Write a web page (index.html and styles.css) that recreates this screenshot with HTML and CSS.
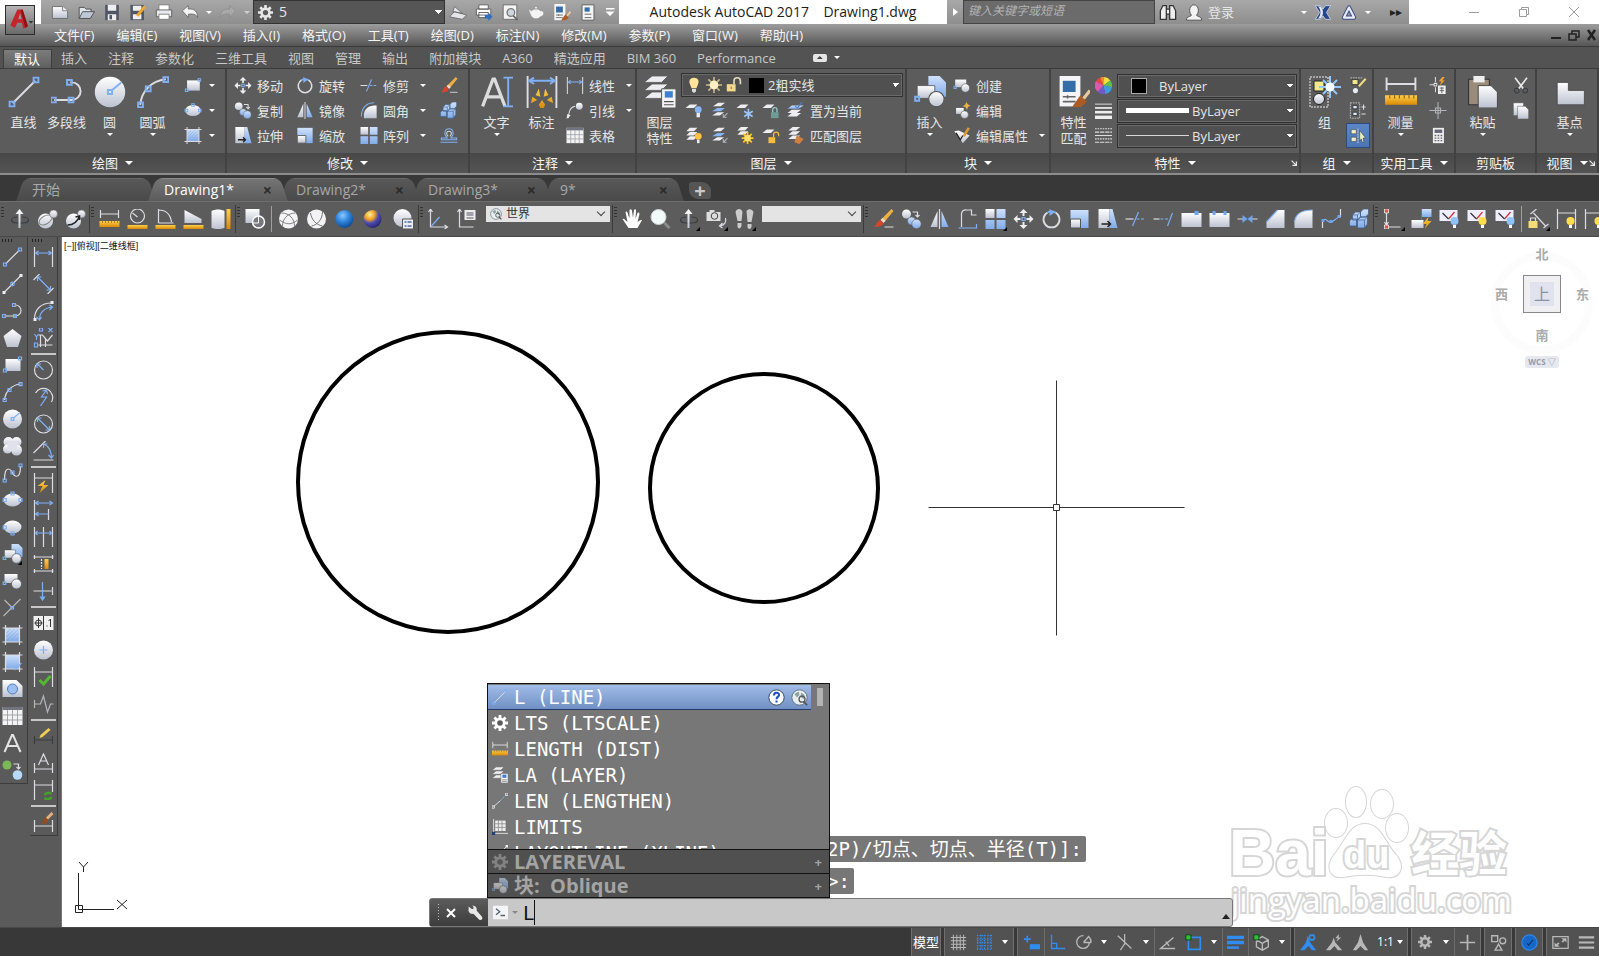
FILE: index.html
```html
<!DOCTYPE html>
<html lang="zh-CN">

<head>
    <meta charset="utf-8">
    <title>Autodesk AutoCAD 2017</title>
    <link rel="stylesheet" href="styles.css">
</head>

<body>
    <!-- icon sprite -->
    <svg class="sprite" width="0" height="0" aria-hidden="true">
        <defs>
            <linearGradient id="light" x1="0" y1="0" x2="0" y2="1">
                <stop offset="0" stop-color="#ffffff" />
                <stop offset="1" stop-color="#bcc2d0" />
            </linearGradient>
            <linearGradient id="sky" x1="0" y1="0" x2="0" y2="1">
                <stop offset="0" stop-color="#cfe1fb" />
                <stop offset="1" stop-color="#7fabea" />
            </linearGradient>
            <linearGradient id="gold" x1="0" y1="0" x2="0" y2="1">
                <stop offset="0" stop-color="#ffd04a" />
                <stop offset="1" stop-color="#d98a08" />
            </linearGradient>
            <radialGradient id="blueball" cx=".4" cy=".3" r=".7">
                <stop offset="0" stop-color="#8cc8ff" />
                <stop offset=".5" stop-color="#2f86dc" />
                <stop offset="1" stop-color="#0f4c98" />
            </radialGradient>
            <radialGradient id="goldball" cx=".35" cy=".25" r=".8">
                <stop offset="0" stop-color="#fff0a0" />
                <stop offset=".35" stop-color="#f0a020" />
                <stop offset=".6" stop-color="#4b4bb0" />
                <stop offset="1" stop-color="#25206a" />
            </radialGradient>
        </defs>

        <!-- draw -->
        <symbol id="line" viewBox="0 0 20 20"><path class="w" d="M3 17L17 3" /><path class="b" d="M1 16h3v3h-3zM16 1h3v3h-3z" /></symbol>
        <symbol id="xline" viewBox="0 0 20 20"><path class="w" d="M2 18L18 2" /><path class="wf" d="M0 17h3v3h-3zM17 0h3v3h-3z" /><circle class="b" cx="10" cy="10" r="1.8" /></symbol>
        <symbol id="pline" viewBox="0 0 20 20"><path class="w" d="M2 15h11a5.500 5.500 0 0 0 0-11h-1" /><path class="b" d="M0 13.500h3v3h-3zM11 13.500h3v3h-3zM10 2.500h3v3h-3z" /></symbol>
        <symbol id="polygon" viewBox="0 0 20 20"><path fill="url(#light)" d="M10 1l9 7-3.500 11h-11L1 8z" /></symbol>
        <symbol id="rect" viewBox="0 0 20 20"><path fill="url(#light)" d="M3 4h15v12H3z" /><path class="b" d="M1 14h3v3h-3zM16 2h3v3h-3z" /></symbol>
        <symbol id="arc" viewBox="0 0 20 20"><path class="w" d="M2 18C3 9 9 3 18 2" /><path class="b" d="M.700 16.500h3v3h-3zM5.500 6.500h3v3h-3zM16.500.700h3v3h-3z" /></symbol>
        <symbol id="circle" viewBox="0 0 20 20"><circle fill="url(#light)" cx="10" cy="10" r="9.500" /><path class="b" d="M11 9l6-5M8.700 8.700h2.600v2.600h-2.600z" /></symbol>
        <symbol id="cloud" viewBox="0 0 20 20"><g fill="url(#light)"><circle cx="6" cy="6" r="5" /><circle cx="14" cy="6" r="5" /><circle cx="5" cy="13" r="4.500" /><circle cx="14" cy="14" r="5.500" /></g><path fill="#dfe2ea" d="M5 5h10v10H5z" /></symbol>
        <symbol id="spline" viewBox="0 0 20 20"><path class="w" d="M2 17C2 0 9 7 10 10s8 8 8-7" /><path class="b" d="M.700 16h3v3h-3zM16.500 1h3v3h-3zM8.500 8h3v3h-3z" /></symbol>
        <symbol id="ellipse" viewBox="0 0 20 20"><ellipse fill="url(#light)" cx="10" cy="10" rx="9" ry="6.500" /><path class="b" d="M.700 8.500h3v3h-3zM16.500 8.500h3v3h-3zM8.500 2h3v3h-3z" /></symbol>
        <symbol id="ellipsearc" viewBox="0 0 20 20"><ellipse fill="url(#light)" cx="10" cy="10" rx="9" ry="6.500" /><path class="b" d="M.700 9h3v3h-3zM8.500 15h3v3h-3z" /></symbol>
        <symbol id="insert" viewBox="0 0 20 20"><path fill="url(#sky)" d="M9 0h7l4 4v9H9z" /><path fill="url(#light)" stroke="#555" stroke-width=".500" d="M2 6h11v8H2z" /><circle fill="url(#light)" stroke="#555" stroke-width=".700" cx="14" cy="14.500" r="4.800" /><path class="b" d="M.700 13h2.500v2.500H.700z" /></symbol>
        <symbol id="block" viewBox="0 0 20 20"><path fill="url(#light)" d="M2 3h13v9H2z" /><circle fill="url(#light)" stroke="#555" stroke-width=".700" cx="14" cy="13" r="5" /><path class="b" d="M.700 11h2.500v2.500H.700z" /></symbol>
        <symbol id="point" viewBox="0 0 20 20"><path class="g" d="M1 18L18 1M2 2l8 8" /><path class="b" d="M8.500 8.500h2.500v2.500H8.500z" /></symbol>
        <symbol id="hatch" viewBox="0 0 20 20"><path fill="url(#sky)" d="M3 3h14v14H3z" /><path stroke="#7d9fd0" stroke-width=".600" d="M4 8l4-4M4 12l8-8M4 16L16 4M8 16l8-8M12 16l4-4" /><path class="w" d="M3 0v20M17 0v20M0 3h20M0 17h20" /></symbol>
        <symbol id="gradient" viewBox="0 0 20 20"><path fill="url(#sky)" d="M3 3h14v14H3z" /><path class="w" d="M3 0v20M17 0v20M0 3h20M0 17h20" /><path class="b" d="M12 18l7-7" /></symbol>
        <symbol id="region" viewBox="0 0 20 20"><path fill="url(#light)" d="M0 1h14l6 6v11H0z" /><circle fill="#9cc0f0" stroke="#557db8" cx="10" cy="10" r="5" /></symbol>
        <symbol id="table" viewBox="0 0 20 20"><path fill="#f4f4f4" d="M0 1h20v18H0z" /><path fill="#70757f" d="M0 1h20v3H0z" /><path stroke="#9a9da5" stroke-width=".900" d="M5 4v15M10 4v15M15 4v15M0 9h20M0 14h20" /></symbol>
        <symbol id="limits" viewBox="0 0 20 20"><path fill="#eee" d="M4 2h13v13H4z" /><path stroke="#888" d="M8 2v13M12.500 2v13M4 6h13M4 10.500h13" /><path class="w" d="M2 0v18h18" /><path fill="#1f3f80" d="M0 16h4v4H0z" /></symbol>
        <symbol id="lengthen" viewBox="0 0 20 20"><path class="w" d="M2 17l8-7" /><path class="b" stroke-dasharray="3 1.500" d="M10 10l8-8" /><path class="w" d="M0 16h3v3H0zM17 0h3v3h-3z" /></symbol>
        <symbol id="text" viewBox="0 0 20 20"><path fill="none" stroke="#e4e4e4" stroke-width="2" d="M2 19L9.500 2h1L18 19M5 13h10" /></symbol>
        <symbol id="mtext" viewBox="0 0 20 20"><path fill="none" stroke="#dcdcdc" stroke-width="2" d="M1 19L7.500 2h1L15 19M3.500 13h9" /><path class="b" d="M17 1v18M14 1h6M14 19h6" /></symbol>
        <symbol id="addsel" viewBox="0 0 20 20"><circle fill="#7cb855" cx="4.500" cy="5" r="4.500" /><circle fill="#b7d9f8" cx="15" cy="15" r="4.800" /><path class="w" d="M11 4h5v5M14 7l2 2 2-2" /></symbol>

        <!-- modify -->
        <symbol id="move" viewBox="0 0 20 20"><path class="wf" d="M10 0l4 4h-3v3H9V4H6zM10 20l4-4h-3v-3H9v3H6zM0 10l4-4v3h3v2H4v3zM20 10l-4-4v3h-3v2h3v3z" /><path class="b" d="M8.500 8.500h3v3h-3z" /></symbol>
        <symbol id="copy" viewBox="0 0 20 20"><circle fill="url(#light)" cx="5" cy="5" r="4.500" /><circle fill="url(#sky)" stroke="#555" stroke-width=".500" cx="10" cy="12" r="4" /><circle fill="url(#sky)" stroke="#555" stroke-width=".500" cx="15" cy="15" r="4.700" /><path class="w" d="M11 3h5v5M14 6l2 2 2-2" /></symbol>
        <symbol id="stretch" viewBox="0 0 20 20"><path fill="url(#light)" d="M1 0h11v19H1z" /><path fill="url(#sky)" d="M12 0h3l5 19h-8z" /><path stroke="#222" stroke-width="1.500" fill="none" d="M4 15h9M10 12l3 3-3 3" /></symbol>
        <symbol id="rotate" viewBox="0 0 20 20"><path fill="none" stroke="#dcdde2" stroke-width="1.800" d="M14 3.500A8 8 0 1 1 6 3.500" /><path fill="none" stroke="#7fb0f5" stroke-width="1.800" d="M6 3.500a8 8 0 0 1 8 0" /><path fill="#7fb0f5" d="M8 0l5 3.500-5 3.500z" /></symbol>
        <symbol id="mirror" viewBox="0 0 20 20"><path fill="url(#light)" d="M8 2v16H1z" /><path fill="url(#sky)" d="M12 2v16h7z" /><path class="w" d="M10 0v20" /></symbol>
        <symbol id="scale" viewBox="0 0 20 20"><path fill="url(#sky)" d="M1 1h18v18H1z" /><path fill="url(#light)" stroke="#555" d="M1 10h10v9H1z" /></symbol>
        <symbol id="trim" viewBox="0 0 20 20"><path class="w" d="M0 10h8" /><path class="b" stroke-dasharray="3 1.500" d="M11 10h9" /><path class="b" d="M7 17l6-14" /></symbol>
        <symbol id="extend" viewBox="0 0 20 20"><path class="w" d="M0 10h6" /><path class="b" stroke-dasharray="3 1.500" d="M7 10h8" /><path class="b" d="M14 17l5-13" /></symbol>
        <symbol id="fillet" viewBox="0 0 20 20"><path fill="url(#light)" d="M4 19V14C5 7 10 4 19 4v15z" /><path class="b" stroke-width="2" d="M1 17C1 7 7 1 16 1" /></symbol>
        <symbol id="fillet2" viewBox="0 0 20 20"><path fill="url(#light)" d="M1 19V13C2 5 7 1 19 1v18z" /><path class="b" d="M1 13C2 5 7 1 19 1" /></symbol>
        <symbol id="chamfer" viewBox="0 0 20 20"><path fill="url(#light)" d="M1 19v-6L12 1h7v18z" /><path class="b" d="M1 13L12 1" /></symbol>
        <symbol id="array" viewBox="0 0 20 20"><path fill="url(#light)" d="M0 0h9v9H0z" /><path fill="url(#sky)" d="M11 0h9v9h-9zM0 11h9v9H0zM11 11h9v9h-9z" /></symbol>
        <symbol id="erase" viewBox="0 0 20 20"><path fill="#f0b040" d="M18 0l2 2-9 11-3-3z" /><path fill="#e8e0d8" d="M9 9l3 3-2 2-3-3z" /><path fill="#d4472a" d="M7 11l3 3c-1 3-5 4-9 4 2-2 2-6 6-7z" /><path stroke="#ddd" d="M11 18h9" /></symbol>
        <symbol id="explode" viewBox="0 0 20 20"><path fill="url(#sky)" stroke="#44618c" stroke-width=".800" d="M3 6l3-3h5v5l-3 3H3zM11 3l3-3h5v5l-3 3h-5zM8 11l3-3h7v7l-3 4H8zM0 12l2-2h5v7H0z" /><path stroke="#44618c" stroke-width=".700" fill="none" d="M8 11h7v8M15 11l3-3M3 6h5v5M8 6l3-3" /></symbol>
        <symbol id="offset" viewBox="0 0 20 20"><path class="w" d="M4 18V5a4 4 0 0 1 5-4h5v5h5" /><path class="b" d="M1 19h18v-4" /></symbol>
        <symbol id="offset2" viewBox="0 0 20 20"><path class="b" d="M0 18h20M1 13h7C3 8 5 2 10 2s7 6 2 11h7v2H1z" /><path class="w" d="M9 11C6 8 7 5 10 5s4 3 1 6" /></symbol>
        <symbol id="break1" viewBox="0 0 20 20"><path fill="url(#light)" d="M0 4h20v14H0z" /><path class="bf" d="M13 2h4v4h-4z" /></symbol>
        <symbol id="break2" viewBox="0 0 20 20"><path fill="url(#light)" d="M0 4h20v14H0z" /><path class="bf" d="M3 2h3v4H3zM14 2h3v4h-3z" /></symbol>
        <symbol id="join" viewBox="0 0 20 20"><path class="w" d="M0 10h6M14 10h6" /><path class="bf" d="M5 6l5 4-5 4zM15 6l-5 4 5 4z" /></symbol>
        <symbol id="blend" viewBox="0 0 20 20"><path class="w" d="M1 19V12M19 8V0" /><path class="b" d="M1 12c4-5 5 3 9 1s5-5 9-5" /><path class="bf" d="M0 10h3v3H0zM8 11h3v3H8zM16 6h3v3h-3z" /></symbol>

        <!-- dimensions -->
        <symbol id="dimlin" viewBox="0 0 20 20"><path class="w" d="M1 0v20M19 0v20" /><path class="b" d="M2 6h16M5 4L2 6l3 2M15 4l3 2-3 2" /></symbol>
        <symbol id="dimali" viewBox="0 0 20 20"><path class="w" d="M0 6l6-6M14 20l6-6" /><path class="b" d="M4 3l13 13M4 7V3h4M17 12v4h-4" /></symbol>
        <symbol id="dimarc" viewBox="0 0 20 20"><path class="w" d="M1 18C1 8 8 2 18 2" /><path class="b" d="M6 19C6 11 11 7 19 6M3 16l3 3 2-3M16 4l3 2-3 3" /><path class="wf" d="M0 17h3v3H0zM17 0h3v3h-3z" /></symbol>
        <symbol id="dimord" viewBox="0 0 20 20"><path class="w" d="M7 7v12M5 17h14M5 7h4l5 6 5-6M12 10v9" /><path class="b" d="M1 6l2 3 2-3M3 9v3M1 15h3v4H1zM6 0h3v3H6zM15 0l4 4M19 0l-4 4" /></symbol>
        <symbol id="dimrad" viewBox="0 0 20 20"><circle class="w" cx="10" cy="10" r="9" /><path class="b" d="M10 10L4 4M3.500 8V4h4" /></symbol>
        <symbol id="dimjog" viewBox="0 0 20 20"><path class="w" d="M2 6a9 9 0 0 1 16 9" /><path class="b" d="M13 3l-5 7h5l-6 9M9 4l4-1 1 4" /></symbol>
        <symbol id="dimdia" viewBox="0 0 20 20"><circle class="w" cx="10" cy="10" r="9" /><path class="b" d="M4 4l12 12M4 8V4h4M16 12v4h-4" /></symbol>
        <symbol id="dimang" viewBox="0 0 20 20"><path class="w" d="M0 19h20M0 12L12 0" /><path class="b" d="M10 3c5 2 8 7 8 14M10 7V3h4M15 14l3 3 2-3" /></symbol>
        <symbol id="dimquick" viewBox="0 0 20 20"><path class="w" d="M1 0v20M19 0v20M1 5h18" /><path fill="url(#gold)" d="M12 7l-8 6h5l-3 7 9-8h-5z" /></symbol>
        <symbol id="dimbase" viewBox="0 0 20 20"><path class="w" d="M1 0v20M15 9v11" /><path class="b" d="M2 3h17M2 14h13M5 1L2 3l3 2M5 12l-3 2 3 2M16 1l3 2-3 2" /></symbol>
        <symbol id="dimcont" viewBox="0 0 20 20"><path class="w" d="M1 0v20M10 0v20M19 0v20" /><path class="b" d="M2 6h16M4 4L2 6l2 2M16 4l2 2-2 2" /></symbol>
        <symbol id="dimspace" viewBox="0 0 20 20"><path class="w" d="M0 3h20M0 17h20M1 1v4M19 1v4M1 15v4M19 15v4" /><path class="w" stroke-dasharray="2 1" d="M8 5v10" /><path fill="url(#gold)" d="M11 5h4v10h-4z" /></symbol>
        <symbol id="dimbreak" viewBox="0 0 20 20"><path class="w" d="M0 10h18M19 6v8" /><path class="b" d="M9 1v17M7 16l2 3 2-3z" /></symbol>
        <symbol id="tolerance" viewBox="0 0 20 20"><path fill="#f0f0f0" d="M0 3h20v14H0z" /><path stroke="#333" fill="none" d="M10 3v14M5 5v10M1 10h8M17 6v8M13 13h1M15 8l2-2" /><circle stroke="#333" fill="none" cx="5" cy="10" r="3" /></symbol>
        <symbol id="center" viewBox="0 0 20 20"><circle fill="url(#light)" cx="10" cy="10" r="9.500" /><path class="b" d="M10 6v8M6 10h8" /></symbol>
        <symbol id="inspect" viewBox="0 0 20 20"><path class="w" d="M1 0v20M19 0v20M1 5h18" /><path fill="none" stroke="#55b830" stroke-width="3" d="M6 13l4 4 7-8" /></symbol>
        <symbol id="jogline" viewBox="0 0 20 20"><path class="g" d="M1 6v8M1 10h6l3-8 4 16 3-8h3" /></symbol>
        <symbol id="dimedit" viewBox="0 0 20 20"><path class="k" d="M1 10v8M19 10v8M1 14h18" /><path fill="#f2cf55" d="M15 2l2 2-8 7-3 1 1-3z" /></symbol>
        <symbol id="dimtedit" viewBox="0 0 20 20"><path class="w" d="M1 10v10M19 10v10M1 16h18M5 12l5-11 5 11M7 8h6" /></symbol>
        <symbol id="dimupdate" viewBox="0 0 20 20"><path class="w" d="M1 0v20M19 0v12M1 5h18" /><path stroke="#45a02c" stroke-width="2.500" fill="none" d="M11 15a4 3 0 0 1 7-1M18 17a4 3 0 0 1-7 1" /></symbol>
        <symbol id="dimstyle" viewBox="0 0 20 20"><path class="w" d="M1 8v12M19 8v12M1 14h18" /><path fill="#e8b080" d="M18 0l2 2-6 6-2-2z" /><path fill="#934d22" d="M12 5l3 3c-1 4-4 4-7 4 2-2 1-6 4-7z" /></symbol>
        <symbol id="dimension" viewBox="0 0 20 20"><path class="w" d="M1 0v20M19 0v20" /><path class="b" d="M2 3h16M5 1L2 3l3 2M15 1l3 2-3 2" /><path fill="url(#gold)" d="M3 17l1-4 3 2zM6 12l2-4 1 5zM11 13l1-5 2 4zM13 15l3-2 1 4zM8 18l2-3 2 3-1 2H9z" /></symbol>
        <symbol id="leader" viewBox="0 0 20 20"><path class="w" d="M2 19C3 11 4 6 10 5" /><circle fill="url(#light)" cx="15" cy="5" r="4" /><path class="wf" d="M0 20l1-6 4 2z" /></symbol>

        <!-- orbit, measure, view -->
        <symbol id="orbit" viewBox="0 0 20 20"><path class="k" stroke-width="2" d="M8 8C0 8 0 14 8 14h5c8 0 8-6 0-6" /><path fill="url(#light)" d="M10 0l4 5h-3v14H9V5H6z" /></symbol>
        <symbol id="forbit" viewBox="0 0 20 20"><circle fill="url(#light)" cx="8" cy="12" r="7.500" /><ellipse fill="none" stroke="#888" cx="8" cy="11" rx="4" ry="7" transform="rotate(60 8 11)" /><circle fill="url(#light)" stroke="#666" stroke-width=".600" cx="16" cy="5" r="4" /></symbol>
        <symbol id="corbit" viewBox="0 0 20 20"><circle fill="url(#light)" cx="8" cy="12" r="7.500" /><circle fill="url(#light)" stroke="#666" stroke-width=".600" cx="16" cy="5" r="4" /><path stroke="#222" stroke-width="1.500" fill="none" d="M2 16c6 0 10-3 12-9M10 8l4-1v4" /></symbol>
        <symbol id="dist" viewBox="0 0 20 20"><path class="w" d="M1 1v8M19 1v8M1 5h18" /><path fill="url(#gold)" d="M0 12h20v6H0z" /><path stroke="#7a5208" stroke-width=".600" d="M3 12v2M6 12v2M9 12v2M12 12v2M15 12v2M18 12v2" /></symbol>
        <symbol id="radius" viewBox="0 0 20 20"><circle class="w" cx="10" cy="7" r="7" /><path class="w" d="M10 8L5 4" /><path fill="url(#gold)" d="M0 16h20v4H0z" /></symbol>
        <symbol id="angle" viewBox="0 0 20 20"><path class="w" d="M3 14V0M3 14h15M3 1c8 0 12 5 13 12" /><path fill="url(#gold)" d="M0 16h20v4H0z" /></symbol>
        <symbol id="area" viewBox="0 0 20 20"><path fill="url(#light)" d="M1 1l17 9v4H1z" /><path fill="url(#gold)" d="M0 16h20v4H0z" /></symbol>
        <symbol id="volume" viewBox="0 0 20 20"><path fill="url(#light)" d="M0 2c4-2 9-2 13 0v17c-4 1.500-9 1.500-13 0z" /><path fill="url(#gold)" d="M15 0h4v20h-4z" /></symbol>
        <symbol id="wire2d" viewBox="0 0 20 20"><path fill="url(#light)" d="M0 0h14v14H0z" /><circle fill="#77797e" stroke="#fff" stroke-width="1.500" cx="13" cy="13" r="6" /><path stroke="#fff" fill="none" d="M13 7v7H7" /></symbol>
        <symbol id="wire" viewBox="0 0 20 20"><circle fill="#f3f3f5" cx="10" cy="10" r="9.500" /><path stroke="#777" stroke-width=".900" fill="none" d="M3 4c8 0 13 6 13 13M17 4C9 4 4 10 4 17M1 11c7 5 12 5 18 0" /></symbol>
        <symbol id="hidden" viewBox="0 0 20 20"><circle fill="#f3f3f5" cx="10" cy="10" r="9.500" /><path stroke="#666" stroke-width=".900" fill="none" d="M4 4c1 7 6 12 12 13M16 3c0 7-5 13-11 14" /></symbol>
        <symbol id="realistic" viewBox="0 0 20 20"><circle fill="url(#blueball)" cx="10" cy="10" r="9" /></symbol>
        <symbol id="conceptual" viewBox="0 0 20 20"><circle fill="url(#goldball)" cx="10" cy="10" r="9" /></symbol>
        <symbol id="vsmanage" viewBox="0 0 20 20"><circle fill="url(#light)" cx="9" cy="9" r="9" /><path fill="#eee" stroke="#555" d="M9 10h11v10H9z" /><path stroke="#4a6ea8" stroke-width="1.500" d="M11 13h2M11 17h2M14 13h4M14 17h4" /></symbol>
        <symbol id="ucs" viewBox="0 0 20 20"><path class="w" d="M2 1v17h17M0 3l2-3 2 3M16 16l3 2-3 2" /><path class="b" d="M3 17l8-9" /></symbol>
        <symbol id="ucsname" viewBox="0 0 20 20"><path class="w" d="M3 1v17h14M1 3l2-3 2 3" /><path fill="#eee" d="M8 1h11v10H8z" /><path stroke="#556" d="M10 4h7M10 6h7M10 9h7" /></symbol>
        <symbol id="pan" viewBox="0 0 20 20"><path fill="#fff" d="M6 19L0 10c1-1 2 0 5 3L3 3c1-1 2-1 3 4l1 2L7 1c1-1 2-1 2.500 1l1 7 1-8c1-1 2-1 2 1l-.500 8 2-6c1-1 2 0 2 1l-2 8c4-3 5-2 4-1l-4 7z" /></symbol>
        <symbol id="zoom" viewBox="0 0 20 20"><path stroke="#8a8a8c" stroke-width="3" d="M13 13l6 6" /><circle fill="#f2fafa" stroke="#cdd3d6" cx="8" cy="8" r="7.500" /></symbol>
        <symbol id="camera" viewBox="0 0 20 20"><path fill="#ddd" d="M0 3h3V1h5v2h6v9H0z" /><circle fill="#ddd" stroke="#444" cx="8" cy="7" r="3.300" /><path class="w" d="M19 9c1 4-1 7-5 8M16 14l-3 3 3 2" /></symbol>
        <symbol id="walk" viewBox="0 0 20 20"><path fill="#ccc" d="M1 3c1-4 6-4 7 0l-1 9H3zM3 14h4v3c-1 3-3 3-4 1zM12 2c2-3 6-2 7 1l-2 10h-4zM13 15h4v3c-1 3-4 2-4 0z" /></symbol>

        <!-- layers -->
        <symbol id="layers" viewBox="0 0 20 20"><path class="wf" stroke="#555" stroke-width=".500" d="M5 10l-5 4h11l4-4zM5 5L0 9h11l4-4zM5 0L0 4h11l4-4z" /><path fill="#f4f4f4" stroke="#555" stroke-width=".600" d="M11 8h9v12h-9z" /><path fill="#3f7fd0" d="M13 9.500h5v4h-5z" /><path stroke="#555" stroke-width=".700" d="M12.500 16h6M12.500 18h6" /></symbol>
        <symbol id="lay-off" viewBox="0 0 20 20"><path class="wf" d="M5 3L0 7h10l4-4z" /><circle fill="#85b5f5" cx="15" cy="9" r="4" /><path class="wf" d="M13 13h4v5h-4z" /></symbol>
        <symbol id="lay-iso" viewBox="0 0 20 20"><path class="wf" d="M9 1L3 5h9l5-4zM8 12l-6 4h9l5-4z" /><path fill="#85b5f5" d="M8 7l-6 4h10l5-4z" /><path class="g" d="M20 13l-5 5M15 14v4h4" /></symbol>
        <symbol id="lay-freeze" viewBox="0 0 20 20"><path class="wf" d="M5 3L0 7h10l4-4z" /><path fill="none" stroke="#9cc4fa" stroke-width="2" d="M14 8v12M9 11l10 6M19 11L9 17" /></symbol>
        <symbol id="lay-lock" viewBox="0 0 20 20"><path class="wf" d="M5 3L0 7h10l4-4z" /><path fill="#6f9d95" d="M10 12h9v7h-9z" /><path fill="none" stroke="#9cc" stroke-width="1.500" d="M12 12V9a2.500 2.500 0 0 1 5 0v3" /></symbol>
        <symbol id="lay-cur" viewBox="0 0 20 20"><path class="wf" d="M5 9l-5 4h11l5-4zM5 13l-5 4h11l5-4z" /><path fill="url(#sky)" d="M5 4L0 8h13l6-4z" /><path stroke="#4a80cc" stroke-width="1.500" fill="none" d="M9 5l3 2 5-7" /></symbol>
        <symbol id="lay-on" viewBox="0 0 20 20"><path class="wf" d="M5 1L1 5h9l4-4zM5 6l-4 4h9l4-4zM5 11l-4 4h9l4-4z" /><circle fill="#ffc33d" cx="15" cy="11" r="4" /><path class="wf" d="M13.500 15h3v4h-3z" /></symbol>
        <symbol id="lay-thaw" viewBox="0 0 20 20"><path class="wf" d="M5 0L1 4h9l4-4zM5 5L1 9h9l4-4z" /><path stroke="#ffc520" stroke-width="2" d="M13 6v14M6 13h14M8 8l10 10M18 8L8 18" /><circle fill="#ffe16a" cx="13" cy="13" r="4" /></symbol>
        <symbol id="lay-unlock" viewBox="0 0 20 20"><path class="wf" d="M5 3L0 7h10l4-4z" /><path fill="#f2bd3c" d="M7 12h8v7H7z" /><path fill="none" stroke="#f2bd3c" stroke-width="1.500" d="M13 12V9a3 3 0 0 1 6 0v2" /></symbol>
        <symbol id="lay-match" viewBox="0 0 20 20"><path class="wf" d="M6 0L1 4h9l5-4zM6 5L1 9h9l5-4zM6 10l-5 4h9l5-4z" /><path fill="#d08040" d="M11 10l8 4-5 6-6-2z" /></symbol>
        <symbol id="bulb" viewBox="0 0 20 20"><path fill="#ffe49a" d="M10 1c5 0 7 4 5 8l-2 5H7L5 9C3 5 5 1 10 1z" /><path fill="#ddd" d="M7.500 15h5v3l-2.500 2-2.500-2z" /></symbol>
        <symbol id="sun" viewBox="0 0 20 20"><path stroke="#c9ba90" stroke-width="2" d="M10 0v20M0 10h20M3 3l14 14M17 3L3 17" /><circle fill="#fff2c0" cx="10" cy="10" r="5.500" /></symbol>
        <symbol id="unlock" viewBox="0 0 20 20"><path fill="#f5d98a" d="M1 9h11v9H1z" /><path fill="none" stroke="#e4dcc0" stroke-width="2" d="M10 9V5a4 4 0 0 1 8 0v4" /><path stroke="#555" d="M6.500 12v3" /></symbol>

        <!-- block, properties, groups -->
        <symbol id="blockedit" viewBox="0 0 20 20"><path fill="url(#light)" d="M3 7h9v7H3z" /><circle fill="url(#light)" stroke="#555" stroke-width=".600" cx="13" cy="15" r="4.500" /><path fill="#f0b040" d="M15 0l2 3 3 1-3 2-1 3-2-3-3-1 3-2z" /></symbol>
        <symbol id="attedit" viewBox="0 0 20 20"><path fill="url(#light)" d="M1 5l5-1 13 6-8 9z" /><path fill="none" stroke="#222" stroke-width="1.500" d="M3 7l5 8 3-5" /><path stroke="#e09a35" stroke-width="3" d="M12 11l6-10" /></symbol>
        <symbol id="matchprop" viewBox="0 0 20 20"><path fill="#f5f5f7" d="M1 0h13v19H1z" /><path fill="#346da8" d="M3 3h8v7H3z" /><path stroke="#666" d="M3 13h8M3 16h8M6 12v2" /><path fill="#ad5b25" d="M14 12l4 4c-3 4-6 4-9 3z" /><path stroke="#e8c9a0" stroke-width="2" d="M16 14l4-5" /></symbol>
        <symbol id="wheel" viewBox="0 0 20 20"><path fill="#e8443a" d="M10 10L1 5a10 10 0 0 1 5-4z" /><path fill="#f08a30" d="M10 10L6 1a10 10 0 0 1 6-1z" /><path fill="#f4de40" d="M10 10L11 0a10 10 0 0 1 7 4z" /><path fill="#5dc04c" d="M10 10l8-6a10 10 0 0 1 2 8z" /><path fill="#3f9be0" d="M10 10l10 2a10 10 0 0 1-8 8z" /><path fill="#7258c8" d="M10 10l2 10a10 10 0 0 1-9-3z" /><path fill="#d85bb0" d="M10 10l-7 7A10 10 0 0 1 1 5z" /></symbol>
        <symbol id="weights" viewBox="0 0 20 20"><path stroke="#eee" d="M0 2.500h20" /><path stroke="#eee" stroke-width="2" d="M0 7h20" /><path stroke="#eee" stroke-width="3" d="M0 12h20" /><path stroke="#eee" stroke-width="4" d="M0 18h20" /></symbol>
        <symbol id="ltypes" viewBox="0 0 20 20"><path stroke="#ddd" stroke-width="1.300" stroke-dasharray="2 1" d="M0 2h20M0 14h20" /><path stroke="#ddd" stroke-width="1.300" stroke-dasharray="5 1" d="M0 6h20M0 18h20" /><path stroke="#ddd" stroke-width="1.300" d="M0 10h20" /></symbol>
        <symbol id="group" viewBox="0 0 32 32"><path fill="none" stroke="#eee" stroke-dasharray="2 1" d="M1 1h18v30H1z" /><path fill="#f1e98c" stroke="#222" d="M5 5h10v10H5z" /><circle fill="url(#light)" stroke="#222" cx="10" cy="23" r="5.500" /><path stroke="#8fc8ff" stroke-width="2" d="M21 0v22M10 11h22M14 4l14 14M28 4L14 18" /><circle fill="#f4fbff" cx="21" cy="11" r="4.500" /></symbol>
        <symbol id="groupedit" viewBox="0 0 20 20"><path fill="#efe88d" stroke="#333" d="M3 3h7v6H3z" /><circle fill="#e8edf5" cx="7" cy="16" r="3" /><path fill="none" stroke="#ccc" stroke-dasharray="2 1" d="M1 1h14" /><path stroke="#f0dc80" stroke-width="2.500" d="M11 11l8-9" /></symbol>
        <symbol id="ungroup" viewBox="0 0 20 20"><path fill="none" stroke="#ccc" stroke-dasharray="2 1" d="M1 1h11v18H1z" /><path fill="#dbe8fb" stroke="#333" d="M4 4h5v4H4zM4 12h5v4H4z" /><path class="w" d="M14 6h5M16.500 3v6M14 14h5" /></symbol>
        <symbol id="groupsel" viewBox="0 0 20 20"><path fill="#f0ecc8" stroke="#333" stroke-width=".600" d="M2 3h6v5H2zM2 12h6v5H2z" /><path fill="none" stroke="#dde" stroke-dasharray="2 1" d="M10 2v17" /><path fill="#e8f0c0" stroke="#333" stroke-width=".600" d="M12 4l7 9-3 0 1 5-2 0-1-4-2 2z" /></symbol>
        <symbol id="quickcalc" viewBox="0 0 20 20"><path class="w" d="M7 0v6M7 12v6M0 9h5M5.500 7.500h3v3h-3z" /><path fill="#eee" d="M10 10h9v10h-9z" /><path stroke="#555" d="M12 13h5M12 16h5M14.500 12v7" /><path fill="#f3a12c" d="M15 0l-4 5h3l-2 5 6-6h-3l3-4z" /></symbol>
        <symbol id="idpoint" viewBox="0 0 20 20"><path class="g" d="M10 0v20M0 10h20M7 7h6v6H7z" /></symbol>
        <symbol id="calc" viewBox="0 0 20 20"><path fill="#eee" d="M4 1h13v18H4z" /><path fill="#667" d="M6 3h9v4H6z" /><path stroke="#667" stroke-width="1.500" stroke-dasharray="2 1.500" d="M6 10h9M6 13h9M6 16h9" /></symbol>
        <symbol id="paste" viewBox="0 0 20 20"><path fill="#9a8c7a" stroke="#333" stroke-width=".700" d="M1 2h13v16H1z" /><path fill="#eee" d="M4 0h7v4H4z" /><path fill="url(#light)" stroke="#444" stroke-width=".600" d="M7 6h8l4 4v10H7z" /></symbol>
        <symbol id="cut" viewBox="0 0 20 20"><path stroke="#e8e8e8" stroke-width="2" d="M3 1l10 13M17 1L7 14" /><circle class="k" stroke-width="2" cx="5" cy="16" r="2.800" /><circle class="k" stroke-width="2" cx="15" cy="16" r="2.800" /></symbol>
        <symbol id="copyclip" viewBox="0 0 20 20"><path fill="url(#light)" stroke="#555" stroke-width=".600" d="M1 1h12v15H1z" /><path fill="url(#light)" stroke="#555" stroke-width=".600" d="M6 5h9l4 4v11H6z" /></symbol>
        <symbol id="base" viewBox="0 0 20 20"><path fill="url(#light)" stroke="#444" stroke-width=".500" d="M2 4h7v5h10v9H2z" /></symbol>

        <!-- constraints at the right end of the toolbar -->
        <symbol id="geo" viewBox="0 0 20 20"><path class="w" d="M3 4v12M1 13l2 3 2-3M4 18h13" /><path fill="#e05050" stroke="#fff" stroke-width=".700" d="M1 0h4v4H1zM1 16h4v4H1z" /></symbol>
        <symbol id="autocon" viewBox="0 0 20 20"><path fill="url(#sky)" d="M10 0h10v8H10z" /><path fill="url(#light)" d="M0 11h12v8H0z" /><path stroke="#d44" d="M10 0v11" /><path fill="url(#gold)" d="M17 8l-6 7h4l-2 5 7-8h-4z" /></symbol>
        <symbol id="showcon" viewBox="0 0 20 20"><path fill="#eef" d="M0 1h18v11H0z" /><path fill="none" stroke="#c33" stroke-width="1.200" d="M9 10l6-7" /><path fill="none" stroke="#333" stroke-width="1.200" d="M3 4l6 6" /><circle fill="#8fc0f8" cx="15" cy="12" r="4" /><path fill="#fff" d="M13.500 16h3v3h-3z" /></symbol>
        <symbol id="showall" viewBox="0 0 20 20"><path fill="#eef" d="M0 1h18v11H0z" /><path fill="none" stroke="#c33" stroke-width="1.200" d="M9 10l6-7" /><path fill="none" stroke="#333" stroke-width="1.200" d="M3 4l6 6" /><circle fill="#ffdc50" cx="15" cy="12" r="4" /><path fill="#fff" d="M13.500 16h3v3h-3z" /></symbol>
        <symbol id="dimlock" viewBox="0 0 20 20"><path class="w" d="M5 4l12 13M2 5l6-5M15 19l5-4" /><path fill="#f3dc75" d="M0 12h9v7H0z" /><path class="w" d="M2 12V9h5v3" /></symbol>
        <symbol id="dimbulb" viewBox="0 0 20 20"><path class="w" d="M1 0v20M19 0v20M1 4h18" /><circle fill="#ffdc50" cx="14" cy="12" r="4" /><path fill="#fff" d="M12.500 16h3v3h-3z" /></symbol>

        <!-- title bar -->
        <symbol id="new" viewBox="0 0 20 20"><path fill="url(#light)" stroke="#666" d="M1 3h12l6 5v9H1z" /><path fill="#eee" stroke="#777" d="M13 3v5h6" /></symbol>
        <symbol id="open" viewBox="0 0 20 20"><path fill="#dfe3ea" stroke="#444" d="M2 17V4h6l2 2h6v3" /><path fill="#bfc8d6" stroke="#444" d="M2 17l4-8h14l-5 8z" /></symbol>
        <symbol id="save" viewBox="0 0 20 20"><path fill="#4e5663" d="M2 1h16v18H2z" /><path fill="#eee" d="M5 1h10v7H5zM5 12h10v7H5z" /><path fill="#4e5663" d="M7 13h3v5H7z" /></symbol>
        <symbol id="saveas" viewBox="0 0 20 20"><path fill="#4e5663" d="M1 1h16v18H1z" /><path fill="#eee" d="M4 2h10v6H4zM4 12h10v6H4z" /><path stroke="#efa62e" stroke-width="3.500" d="M9 14L18 3" /></symbol>
        <symbol id="print" viewBox="0 0 20 20"><path fill="#fff" stroke="#777" d="M4 1h12v7H4z" /><path fill="#e9eaee" stroke="#555" d="M1 7h18v8H1z" /><path fill="#fff" stroke="#777" d="M4 12h12v6H4z" /></symbol>
        <symbol id="undo" viewBox="0 0 20 20"><path fill="#f4f4f4" stroke="#555" stroke-width=".800" d="M1 8l7-6v4c7-1 11 3 11 10-1-3-4-5-11-4v4z" /></symbol>
        <symbol id="redo" viewBox="0 0 20 20"><path fill="#a9a9a9" stroke="#8c8c8c" d="M19 8l-7-6v4C5 5 1 9 1 16c1-3 4-5 11-4v4z" /></symbol>
        <symbol id="gear" viewBox="0 0 20 20"><path stroke="currentColor" stroke-width="3.500" d="M10 0v20M0 10h20M3 3l14 14M17 3L3 17" /><circle fill="currentColor" cx="10" cy="10" r="7" /><circle fill="#5a5a5a" cx="10" cy="10" r="3.500" /></symbol>
        <symbol id="publish" viewBox="0 0 20 20"><path fill="#e4e6ea" stroke="#555" stroke-width=".800" d="M0 15l6-6 14 4-5 5zM4 9l2-6 9 8z" /></symbol>
        <symbol id="plot" viewBox="0 0 20 20"><path fill="#fff" stroke="#555" d="M4 1h11v5H4zM1 6h17v7H1zM4 10h11v6H4z" /><path fill="#2f6fc0" d="M11 13h4v-3l5 5-5 5v-3h-4z" /></symbol>
        <symbol id="preview" viewBox="0 0 20 20"><path fill="#f4f4f4" stroke="#666" d="M2 1h16v17H2z" /><circle fill="#cfd6df" stroke="#777" stroke-width="1.500" cx="11" cy="10" r="4.500" /><path stroke="#666" stroke-width="2" d="M14 14l5 5" /></symbol>
        <symbol id="teapot" viewBox="0 0 20 20"><path fill="#f4f4f4" stroke="#888" stroke-width=".600" d="M1 6l4 2c2-3 8-3 10 0 5-1 6 6 0 7-2 3-8 3-10 0-2-2-2-5-4-9zM8.500 3h3v3h-3z" /></symbol>
        <symbol id="props" viewBox="0 0 20 20"><path fill="#f5f5f7" stroke="#555" d="M3 1h14v18H3z" /><path fill="#346da8" d="M6 4h6v5H6z" /><path stroke="#555" d="M6 12h8M6 16h8" /></symbol>
        <symbol id="binocular" viewBox="0 0 20 20"><path fill="#eee" stroke="#333" stroke-width="1.500" d="M1 18V8l3-6h4v16zM12 18V2h4l3 6v10zM8 6h4v6H8z" /></symbol>
        <symbol id="user" viewBox="0 0 20 20"><path fill="#f3f3f3" stroke="#444" d="M1 19c0-5 6-4 6-6C3 9 5 1 10 1s7 8 3 12c0 2 6 1 6 6z" /></symbol>
        <symbol id="exchange" viewBox="0 0 20 20"><path fill="#26468c" stroke="#e4eaf5" stroke-width=".800" d="M1 2h6l3 4 3-4h6l-5 8 5 8h-6l-3-4-3 4H1l5-8z" /><path fill="#dfe6f5" d="M4 3c4 3 4 11 0 14h3c4-3 4-11 0-14z" /></symbol>
        <symbol id="a360" viewBox="0 0 20 20"><path fill="none" stroke="#3c4c86" stroke-width="5" stroke-linejoin="round" d="M10 4L4 16h12z" /><path fill="none" stroke="#e8ecf5" stroke-width="2.500" stroke-linejoin="round" d="M10 4L4 16h12z" /></symbol>

        <!-- window controls -->
        <symbol id="win-min" viewBox="0 0 12 12"><path stroke="currentColor" d="M1 6.500h10" /></symbol>
        <symbol id="win-max" viewBox="0 0 12 12"><path fill="none" stroke="currentColor" d="M1.500 3.500h7v7h-7zM3.500 3.500v-2h7v7h-2" /></symbol>
        <symbol id="win-close" viewBox="0 0 12 12"><path stroke="currentColor" d="M1 1l10 10M11 1L1 11" /></symbol>
        <symbol id="doc-min" viewBox="0 0 12 12"><path stroke="currentColor" stroke-width="2" d="M1 9h10" /></symbol>
        <symbol id="doc-max" viewBox="0 0 12 12"><path fill="none" stroke="currentColor" stroke-width="1.500" d="M1 5h7v6H1zM4 5V2h7v6H8" /></symbol>
        <symbol id="doc-close" viewBox="0 0 12 12"><path stroke="currentColor" stroke-width="2.500" d="M2 1l7 10M9 1L2 11" /></symbol>

        <!-- command line and status bar -->
        <symbol id="wrench" viewBox="0 0 20 20"><path fill="#e8e8e8" d="M2 2l4 3h2V2l-2-1c4-1 7 2 6 6l7 8c1 3-2 5-4 3l-7-7C4 12 1 8 2 5z" /></symbol>
        <symbol id="prompt" viewBox="0 0 20 20"><path fill="#f4f4f6" d="M0 1h20v18H0z" /><path fill="none" stroke="#556074" stroke-width="1.800" d="M4 5l5 4-5 4M10 14h6" /></symbol>
        <symbol id="help" viewBox="0 0 20 20"><circle fill="#fff" stroke="#234" cx="10" cy="10" r="9" /><path fill="none" stroke="#1c4fc0" stroke-width="2.400" d="M7 7.500c0-4 6-4 6-.500 0 2-3 2-3 5M10 13.500v2.500" /></symbol>
        <symbol id="globe" viewBox="0 0 20 20"><circle fill="#e8eef0" stroke="#567" cx="10" cy="10" r="9" /><path fill="#8da39f" d="M4 6l5-3 1 4-3 3zM12 4l4 3-1 5-4-3z" /><circle fill="none" stroke="#555" stroke-width="1.500" cx="13" cy="12" r="3.500" /><path stroke="#555" stroke-width="2" d="M15 15l4 4" /></symbol>
        <symbol id="s-grid" viewBox="0 0 20 20"><path stroke="currentColor" stroke-width="1.200" d="M4 1v18M8 1v18M12 1v18M16 1v18M1 4h18M1 8h18M1 12h18M1 16h18" /></symbol>
        <symbol id="s-snap" viewBox="0 0 20 20"><path stroke="currentColor" stroke-width="1.500" stroke-dasharray="1.500 1.500" d="M2 1v18M6 1v18M10 1v18M14 1v18M18 1v18M1 2h18M1 6h18M1 10h18M1 14h18M1 18h18" /></symbol>
        <symbol id="s-dyn" viewBox="0 0 20 20"><path stroke="currentColor" stroke-width="2" d="M5 2v8M1 6h8" /><path fill="currentColor" d="M8 12h12v6H8z" /></symbol>
        <symbol id="s-ortho" viewBox="0 0 20 20"><path fill="none" stroke="currentColor" stroke-width="1.600" d="M3 1v16h16M3 11h6v6" /></symbol>
        <symbol id="s-polar" viewBox="0 0 20 20"><path fill="none" stroke="currentColor" stroke-width="1.600" d="M17 10a7.500 7.500 0 1 1-7-8M10 10h9M10 10l6-7a9 9 0 0 1 3 7" /></symbol>
        <symbol id="s-iso" viewBox="0 0 20 20"><path fill="none" stroke="currentColor" stroke-width="1.500" d="M1 2l16 15M10 10L4 19M9 0v13" /></symbol>
        <symbol id="s-track" viewBox="0 0 20 20"><path fill="none" stroke="currentColor" stroke-width="1.600" d="M19 17H2L17 4M8 9l4 5" /></symbol>
        <symbol id="s-osnap" viewBox="0 0 20 20"><path fill="none" stroke="currentColor" stroke-width="2" d="M5 4h13v14H4V6" /><path fill="#2fbf3a" stroke="#0a3a10" d="M1 1h6v6H1z" /></symbol>
        <symbol id="s-lwt" viewBox="0 0 20 20"><path stroke="currentColor" stroke-width="4" d="M0 4h20M0 10h20" /><path stroke="currentColor" stroke-width="3" d="M0 16h14" /></symbol>
        <symbol id="s-3d" viewBox="0 0 20 20"><path fill="none" stroke="currentColor" stroke-width="1.600" d="M11 3l7 4v8l-7 4-7-4V7zM4 7l7 4 7-4M11 11v8" /><path fill="#2fbf3a" stroke="#0a3a10" d="M1 1h6v6H1z" /></symbol>
        <symbol id="s-person" viewBox="0 0 20 20"><path fill="currentColor" d="M9 2l3 8 7 9h-5l-4-5-5 5H0l7-9z" /><circle fill="none" stroke="currentColor" stroke-width="2" cx="14" cy="4" r="3" /></symbol>
        <symbol id="s-auto" viewBox="0 0 20 20"><path fill="currentColor" d="M9 4l2 6 8 9h-5l-4-5-5 5H0l7-9zM15 0l-4 5h3l-2 4 6-5h-3z" /></symbol>
        <symbol id="s-scale" viewBox="0 0 20 20"><path fill="currentColor" d="M10 0l3 10 6 9h-4l-5-5-5 5H1l6-9z" /></symbol>
        <symbol id="s-plus" viewBox="0 0 20 20"><path stroke="currentColor" stroke-width="2" d="M10 1v18M1 10h18" /></symbol>
        <symbol id="s-iso2" viewBox="0 0 20 20"><path fill="none" stroke="currentColor" stroke-width="1.600" d="M2 2h7v7H2zM10 12l4 7H6z" /><circle fill="none" stroke="currentColor" stroke-width="1.600" cx="15" cy="8" r="3.500" /></symbol>
        <symbol id="s-perf" viewBox="0 0 20 20"><circle fill="#1668c8" stroke="#2f86e8" stroke-width="1.500" cx="10" cy="10" r="9" /><path fill="none" stroke="#0c3668" stroke-width="1.500" d="M7 11l2 2 5-6" /></symbol>
        <symbol id="s-full" viewBox="0 0 20 20"><path fill="none" stroke="currentColor" stroke-width="1.500" d="M1 3h18v14H1z" /><path fill="currentColor" d="M11 5h6v5l-2-2-2 2-2-1 2-2zM9 15H3v-5l2 2 2-2 2 1-2 2z" /></symbol>
        <symbol id="s-menu" viewBox="0 0 20 20"><path stroke="currentColor" stroke-width="2.500" d="M1 4h18M1 10h18M1 16h18" /></symbol>
        <symbol id="launch" viewBox="0 0 10 10"><path fill="none" stroke="#e8e8e8" stroke-width="1.500" d="M2 2l6 6M8 3v5H3" /></symbol>
    </svg>

    <header class="titlebar">
        <button class="app-button" aria-label="应用程序菜单">
            <svg viewBox="0 0 32 32">
                <path fill="#c4242b" d="M13 4h6l6 19-5 3-2-7h-5l-3 6-5-3zM14 15h4l-2-7z" />
                <path fill="#8c1218" d="M19 4l6 19-3 2-5-20z" />
                <path fill="#333" d="M26 17h5l-2.500 3z" />
            </svg>
        </button>
        <div class="qat">
            <button class="q" aria-label="新建"><svg><use href="#new" /></svg></button>
            <button class="q" aria-label="打开"><svg><use href="#open" /></svg></button>
            <button class="q" aria-label="保存"><svg><use href="#save" /></svg></button>
            <button class="q" aria-label="另存为"><svg><use href="#saveas" /></svg></button>
            <button class="q" aria-label="打印"><svg><use href="#print" /></svg></button>
            <button class="q" aria-label="放弃"><svg><use href="#undo" /></svg></button>
            <button class="drop" aria-label="放弃列表"></button>
            <button class="q" aria-label="重做"><svg><use href="#redo" /></svg></button>
            <button class="drop dim" aria-label="重做列表"></button>
            <div class="workspace">
                <svg><use href="#gear" /></svg>
                <select aria-label="工作空间">
                    <option>5</option>
                </select>
            </div>
            <button class="q" aria-label="发布"><svg><use href="#publish" /></svg></button>
            <button class="q" aria-label="绘图仪"><svg><use href="#plot" /></svg></button>
            <button class="q" aria-label="预览"><svg><use href="#preview" /></svg></button>
            <button class="q" aria-label="渲染"><svg><use href="#teapot" /></svg></button>
            <button class="q" aria-label="特性匹配"><svg><use href="#matchprop" /></svg></button>
            <button class="q" aria-label="特性"><svg><use href="#props" /></svg></button>
            <button class="drop bar" aria-label="自定义"></button>
        </div>
        <h1 class="doc-title">Autodesk AutoCAD 2017 &nbsp;&nbsp; Drawing1.dwg</h1>
        <div class="infocenter">
            <button class="drop side" aria-label="收拢"></button>
            <input class="search" type="text" placeholder="键入关键字或短语" aria-label="搜索">
            <button class="q" aria-label="搜索"><svg><use href="#binocular" /></svg></button>
            <button class="login"><svg><use href="#user" /></svg>登录</button>
            <button class="drop" aria-label="登录选项"></button>
            <button class="q" aria-label="Exchange"><svg><use href="#exchange" /></svg></button>
            <button class="q" aria-label="A360"><svg><use href="#a360" /></svg></button>
            <button class="drop" aria-label="更多"></button>
            <button class="more" aria-label="展开">▸▸</button>
        </div>
        <div class="win-controls">
            <button aria-label="最小化"><svg><use href="#win-min" /></svg></button>
            <button aria-label="还原"><svg><use href="#win-max" /></svg></button>
            <button aria-label="关闭"><svg><use href="#win-close" /></svg></button>
        </div>
    </header>

    <nav class="menubar">
        <button>文件(F)</button>
        <button>编辑(E)</button>
        <button>视图(V)</button>
        <button>插入(I)</button>
        <button>格式(O)</button>
        <button>工具(T)</button>
        <button>绘图(D)</button>
        <button>标注(N)</button>
        <button>修改(M)</button>
        <button>参数(P)</button>
        <button>窗口(W)</button>
        <button>帮助(H)</button>
        <div class="doc-controls">
            <button aria-label="最小化"><svg><use href="#doc-min" /></svg></button>
            <button aria-label="还原"><svg><use href="#doc-max" /></svg></button>
            <button aria-label="关闭"><svg><use href="#doc-close" /></svg></button>
        </div>
    </nav>

    <nav class="ribbon-tabs">
        <button class="active">默认</button>
        <button>插入</button>
        <button>注释</button>
        <button>参数化</button>
        <button>三维工具</button>
        <button>视图</button>
        <button>管理</button>
        <button>输出</button>
        <button>附加模块</button>
        <button>A360</button>
        <button>精选应用</button>
        <button>BIM 360</button>
        <button>Performance</button>
        <button class="collapse" aria-label="最小化功能区"><span class="pill"></span><span class="caret small"></span></button>
    </nav>

    <section class="ribbon">
        <div class="panel">
            <div class="panel-body p-draw">
                <button class="big"><svg><use href="#line" /></svg>直线</button>
                <button class="big"><svg><use href="#pline" /></svg>多段线</button>
                <button class="big"><svg><use href="#circle" /></svg>圆<span class="caret small"></span></button>
                <button class="big"><svg><use href="#arc" /></svg>圆弧<span class="caret small"></span></button>
                <div class="rows">
                    <button class="row" aria-label="矩形"><svg><use href="#rect" /></svg><span class="caret small"></span></button>
                    <button class="row" aria-label="椭圆"><svg><use href="#ellipse" /></svg><span class="caret small"></span></button>
                    <button class="row" aria-label="图案填充"><svg><use href="#hatch" /></svg><span class="caret small"></span></button>
                </div>
            </div>
            <h2>绘图<span class="caret"></span></h2>
        </div>

        <div class="panel">
            <div class="panel-body">
                <div class="rows modify">
                    <button class="row"><svg><use href="#move" /></svg>移动</button>
                    <button class="row"><svg><use href="#rotate" /></svg>旋转</button>
                    <button class="row"><svg><use href="#trim" /></svg>修剪<span class="caret small"></span></button>
                    <button class="row" aria-label="删除"><svg><use href="#erase" /></svg></button>
                    <button class="row"><svg><use href="#copy" /></svg>复制</button>
                    <button class="row"><svg><use href="#mirror" /></svg>镜像</button>
                    <button class="row"><svg><use href="#fillet" /></svg>圆角<span class="caret small"></span></button>
                    <button class="row" aria-label="分解"><svg><use href="#explode" /></svg></button>
                    <button class="row"><svg><use href="#stretch" /></svg>拉伸</button>
                    <button class="row"><svg><use href="#scale" /></svg>缩放</button>
                    <button class="row"><svg><use href="#array" /></svg>阵列<span class="caret small"></span></button>
                    <button class="row" aria-label="偏移"><svg><use href="#offset2" /></svg></button>
                </div>
            </div>
            <h2>修改<span class="caret"></span></h2>
        </div>

        <div class="panel">
            <div class="panel-body p-annot">
                <button class="big"><svg><use href="#mtext" /></svg>文字<span class="caret small"></span></button>
                <button class="big"><svg><use href="#dimension" /></svg>标注</button>
                <div class="rows">
                    <button class="row"><svg><use href="#dimlin" /></svg>线性<span class="caret small"></span></button>
                    <button class="row"><svg><use href="#leader" /></svg>引线<span class="caret small"></span></button>
                    <button class="row"><svg><use href="#table" /></svg>表格</button>
                </div>
            </div>
            <h2>注释<span class="caret"></span></h2>
        </div>

        <div class="panel">
            <div class="panel-body p-layer">
                <button class="big"><svg><use href="#layers" /></svg>图层<br>特性</button>
                <div class="layer-tools">
                    <div class="combo">
                        <svg><use href="#bulb" /></svg>
                        <svg><use href="#sun" /></svg>
                        <svg><use href="#unlock" /></svg>
                        <span class="swatch"></span>
                        <select aria-label="图层">
                            <option>2粗实线</option>
                        </select>
                    </div>
                    <div class="rows layer-grid">
                        <button class="row" aria-label="关"><svg><use href="#lay-off" /></svg></button>
                        <button class="row" aria-label="隔离"><svg><use href="#lay-iso" /></svg></button>
                        <button class="row" aria-label="冻结"><svg><use href="#lay-freeze" /></svg></button>
                        <button class="row" aria-label="锁定"><svg><use href="#lay-lock" /></svg></button>
                        <button class="row"><svg><use href="#lay-cur" /></svg>置为当前</button>
                        <button class="row" aria-label="打开所有图层"><svg><use href="#lay-on" /></svg></button>
                        <button class="row" aria-label="取消隔离"><svg><use href="#lay-iso" /></svg></button>
                        <button class="row" aria-label="解冻"><svg><use href="#lay-thaw" /></svg></button>
                        <button class="row" aria-label="解锁"><svg><use href="#lay-unlock" /></svg></button>
                        <button class="row"><svg><use href="#lay-match" /></svg>匹配图层</button>
                    </div>
                </div>
            </div>
            <h2>图层<span class="caret"></span></h2>
        </div>

        <div class="panel">
            <div class="panel-body p-block">
                <button class="big"><svg><use href="#insert" /></svg>插入<span class="caret small"></span></button>
                <div class="rows">
                    <button class="row"><svg><use href="#block" /></svg>创建</button>
                    <button class="row"><svg><use href="#blockedit" /></svg>编辑</button>
                    <button class="row"><svg><use href="#attedit" /></svg>编辑属性<span class="caret small"></span></button>
                </div>
            </div>
            <h2>块<span class="caret"></span></h2>
        </div>

        <div class="panel">
            <div class="panel-body p-props">
                <button class="big"><svg><use href="#matchprop" /></svg>特性<br>匹配</button>
                <div class="rows prop-grid">
                    <svg><use href="#wheel" /></svg>
                    <div class="combo">
                        <span class="swatch framed"></span>
                        <select aria-label="对象颜色">
                            <option>ByLayer</option>
                        </select>
                    </div>
                    <svg><use href="#weights" /></svg>
                    <div class="combo">
                        <span class="stroke thick"></span>
                        <select aria-label="线宽">
                            <option>ByLayer</option>
                        </select>
                    </div>
                    <svg><use href="#ltypes" /></svg>
                    <div class="combo">
                        <span class="stroke"></span>
                        <select aria-label="线型">
                            <option>ByLayer</option>
                        </select>
                    </div>
                </div>
            </div>
            <h2>特性<span class="caret"></span><svg class="launch"><use href="#launch" /></svg></h2>
        </div>

        <div class="panel">
            <div class="panel-body p-group">
                <button class="big"><svg><use href="#group" /></svg>组</button>
                <div class="rows">
                    <button class="row" aria-label="编辑组"><svg><use href="#groupedit" /></svg></button>
                    <button class="row" aria-label="解除编组"><svg><use href="#ungroup" /></svg></button>
                    <button class="row pressed" aria-label="组选择"><svg><use href="#groupsel" /></svg></button>
                </div>
            </div>
            <h2>组<span class="caret"></span></h2>
        </div>

        <div class="panel">
            <div class="panel-body p-util">
                <button class="big"><svg><use href="#dist" /></svg>测量<span class="caret small"></span></button>
                <div class="rows">
                    <button class="row" aria-label="快速选择"><svg><use href="#quickcalc" /></svg></button>
                    <button class="row" aria-label="点坐标"><svg><use href="#idpoint" /></svg></button>
                    <button class="row" aria-label="计算器"><svg><use href="#calc" /></svg></button>
                </div>
            </div>
            <h2>实用工具<span class="caret"></span></h2>
        </div>

        <div class="panel">
            <div class="panel-body p-clip">
                <button class="big"><svg><use href="#paste" /></svg>粘贴<span class="caret small"></span></button>
                <div class="rows">
                    <button class="row" aria-label="剪切"><svg><use href="#cut" /></svg></button>
                    <button class="row" aria-label="复制"><svg><use href="#copyclip" /></svg></button>
                </div>
            </div>
            <h2>剪贴板</h2>
        </div>

        <div class="panel">
            <div class="panel-body p-view">
                <button class="big"><svg><use href="#base" /></svg>基点<span class="caret small"></span></button>
            </div>
            <h2>视图<span class="caret"></span><svg class="launch"><use href="#launch" /></svg></h2>
        </div>
    </section>

    <nav class="file-tabs">
        <div class="file-tab"><button>开始</button></div>
        <div class="file-tab active"><button>Drawing1*</button><button class="close" aria-label="关闭">×</button></div>
        <div class="file-tab"><button>Drawing2*</button><button class="close" aria-label="关闭">×</button></div>
        <div class="file-tab"><button>Drawing3*</button><button class="close" aria-label="关闭">×</button></div>
        <div class="file-tab"><button>9*</button><button class="close" aria-label="关闭">×</button></div>
        <button class="add-tab" aria-label="新图形">+</button>
    </nav>

    <div class="toolbars">
        <div class="bar-group">
            <button class="tool" aria-label="受约束的动态观察"><svg><use href="#orbit" /></svg></button>
            <button class="tool" aria-label="自由动态观察"><svg><use href="#forbit" /></svg></button>
            <button class="tool" aria-label="连续动态观察"><svg><use href="#corbit" /></svg></button>
        </div>
        <div class="bar-group">
            <button class="tool" aria-label="距离"><svg><use href="#dist" /></svg></button>
            <button class="tool" aria-label="半径"><svg><use href="#radius" /></svg></button>
            <button class="tool" aria-label="角度"><svg><use href="#angle" /></svg></button>
            <button class="tool" aria-label="面积"><svg><use href="#area" /></svg></button>
            <button class="tool" aria-label="体积"><svg><use href="#volume" /></svg></button>
        </div>
        <div class="bar-group">
            <button class="tool" aria-label="二维线框"><svg><use href="#wire2d" /></svg></button>
            <span class="split"></span>
            <button class="tool" aria-label="三维线框"><svg><use href="#wire" /></svg></button>
            <button class="tool" aria-label="三维隐藏"><svg><use href="#hidden" /></svg></button>
            <button class="tool" aria-label="真实"><svg><use href="#realistic" /></svg></button>
            <button class="tool" aria-label="概念"><svg><use href="#conceptual" /></svg></button>
            <button class="tool last" aria-label="管理视觉样式"><svg><use href="#vsmanage" /></svg></button>
        </div>
        <div class="bar-group">
            <button class="tool" aria-label="UCS"><svg><use href="#ucs" /></svg></button>
            <button class="tool" aria-label="命名 UCS"><svg><use href="#ucsname" /></svg></button>
            <div class="light-select world">
                <svg><use href="#globe" /></svg>
                <select aria-label="坐标系">
                    <option>世界</option>
                </select>
                <i class="chevron"></i>
            </div>
        </div>
        <div class="bar-group">
            <button class="tool" aria-label="平移"><svg><use href="#pan" /></svg></button>
            <button class="tool" aria-label="缩放"><svg><use href="#zoom" /></svg></button>
            <button class="tool flyout" aria-label="动态观察"><svg><use href="#orbit" /></svg></button>
            <button class="tool flyout" aria-label="相机"><svg><use href="#camera" /></svg></button>
            <button class="tool flyout" aria-label="漫游"><svg><use href="#walk" /></svg></button>
            <div class="light-select view">
                <select aria-label="视图">
                    <option></option>
                </select>
                <i class="chevron"></i>
            </div>
        </div>
        <div class="bar-group">
            <button class="tool" aria-label="删除"><svg><use href="#erase" /></svg></button>
            <button class="tool" aria-label="复制"><svg><use href="#copy" /></svg></button>
            <button class="tool" aria-label="镜像"><svg><use href="#mirror" /></svg></button>
            <button class="tool" aria-label="偏移"><svg><use href="#offset" /></svg></button>
            <button class="tool flyout" aria-label="阵列"><svg><use href="#array" /></svg></button>
            <button class="tool" aria-label="移动"><svg><use href="#move" /></svg></button>
            <button class="tool" aria-label="旋转"><svg><use href="#rotate" /></svg></button>
            <button class="tool" aria-label="缩放"><svg><use href="#scale" /></svg></button>
            <button class="tool" aria-label="拉伸"><svg><use href="#stretch" /></svg></button>
            <button class="tool" aria-label="修剪"><svg><use href="#trim" /></svg></button>
            <button class="tool" aria-label="延伸"><svg><use href="#extend" /></svg></button>
            <button class="tool" aria-label="打断于点"><svg><use href="#break1" /></svg></button>
            <button class="tool" aria-label="打断"><svg><use href="#break2" /></svg></button>
            <button class="tool" aria-label="合并"><svg><use href="#join" /></svg></button>
            <button class="tool" aria-label="倒角"><svg><use href="#chamfer" /></svg></button>
            <button class="tool" aria-label="圆角"><svg><use href="#fillet2" /></svg></button>
            <button class="tool" aria-label="光顺曲线"><svg><use href="#blend" /></svg></button>
            <button class="tool" aria-label="分解"><svg><use href="#explode" /></svg></button>
        </div>
        <div class="bar-group">
            <button class="tool flyout" aria-label="几何约束"><svg><use href="#geo" /></svg></button>
            <button class="tool" aria-label="自动约束"><svg><use href="#autocon" /></svg></button>
            <button class="tool" aria-label="显示约束"><svg><use href="#showcon" /></svg></button>
            <button class="tool" aria-label="全部显示"><svg><use href="#showall" /></svg></button>
            <button class="tool" aria-label="全部隐藏"><svg><use href="#showcon" /></svg></button>
            <span class="split"></span>
            <button class="tool flyout" aria-label="标注约束"><svg><use href="#dimlock" /></svg></button>
            <button class="tool" aria-label="显示动态约束"><svg><use href="#dimbulb" /></svg></button>
            <button class="tool" aria-label="显示全部动态约束"><svg><use href="#dimbulb" /></svg></button>
        </div>
    </div>

    <main class="workarea">
        <div class="side-bars">
            <div class="side-bar draw-bar">
                <button class="tool" aria-label="直线"><svg><use href="#line" /></svg></button>
                <button class="tool" aria-label="构造线"><svg><use href="#xline" /></svg></button>
                <button class="tool" aria-label="多段线"><svg><use href="#pline" /></svg></button>
                <button class="tool" aria-label="多边形"><svg><use href="#polygon" /></svg></button>
                <button class="tool" aria-label="矩形"><svg><use href="#rect" /></svg></button>
                <button class="tool" aria-label="圆弧"><svg><use href="#arc" /></svg></button>
                <button class="tool" aria-label="圆"><svg><use href="#circle" /></svg></button>
                <button class="tool" aria-label="修订云线"><svg><use href="#cloud" /></svg></button>
                <button class="tool" aria-label="样条曲线"><svg><use href="#spline" /></svg></button>
                <button class="tool" aria-label="椭圆"><svg><use href="#ellipse" /></svg></button>
                <button class="tool" aria-label="椭圆弧"><svg><use href="#ellipsearc" /></svg></button>
                <button class="tool flyout" aria-label="插入块"><svg><use href="#insert" /></svg></button>
                <button class="tool" aria-label="创建块"><svg><use href="#block" /></svg></button>
                <button class="tool" aria-label="点"><svg><use href="#point" /></svg></button>
                <button class="tool" aria-label="图案填充"><svg><use href="#hatch" /></svg></button>
                <button class="tool" aria-label="渐变色"><svg><use href="#gradient" /></svg></button>
                <button class="tool" aria-label="面域"><svg><use href="#region" /></svg></button>
                <button class="tool" aria-label="表格"><svg><use href="#table" /></svg></button>
                <button class="tool" aria-label="多行文字"><svg><use href="#text" /></svg></button>
                <button class="tool" aria-label="添加选定对象"><svg><use href="#addsel" /></svg></button>
            </div>
            <div class="side-bar">
                <button class="tool" aria-label="线性"><svg><use href="#dimlin" /></svg></button>
                <button class="tool" aria-label="对齐"><svg><use href="#dimali" /></svg></button>
                <button class="tool" aria-label="弧长"><svg><use href="#dimarc" /></svg></button>
                <button class="tool" aria-label="坐标"><svg><use href="#dimord" /></svg></button>
                <hr>
                <button class="tool" aria-label="半径"><svg><use href="#dimrad" /></svg></button>
                <button class="tool" aria-label="折弯"><svg><use href="#dimjog" /></svg></button>
                <button class="tool" aria-label="直径"><svg><use href="#dimdia" /></svg></button>
                <button class="tool" aria-label="角度"><svg><use href="#dimang" /></svg></button>
                <hr>
                <button class="tool" aria-label="快速标注"><svg><use href="#dimquick" /></svg></button>
                <button class="tool" aria-label="基线"><svg><use href="#dimbase" /></svg></button>
                <button class="tool" aria-label="连续"><svg><use href="#dimcont" /></svg></button>
                <button class="tool" aria-label="等距标注"><svg><use href="#dimspace" /></svg></button>
                <button class="tool" aria-label="折断标注"><svg><use href="#dimbreak" /></svg></button>
                <hr>
                <button class="tool" aria-label="公差"><svg><use href="#tolerance" /></svg></button>
                <button class="tool" aria-label="圆心标记"><svg><use href="#center" /></svg></button>
                <button class="tool" aria-label="检验"><svg><use href="#inspect" /></svg></button>
                <button class="tool" aria-label="折弯线性"><svg><use href="#jogline" /></svg></button>
                <hr>
                <button class="tool" aria-label="编辑标注"><svg><use href="#dimedit" /></svg></button>
                <button class="tool" aria-label="编辑标注文字"><svg><use href="#dimtedit" /></svg></button>
                <button class="tool" aria-label="标注更新"><svg><use href="#dimupdate" /></svg></button>
                <hr>
                <button class="tool" aria-label="标注样式"><svg><use href="#dimstyle" /></svg></button>
            </div>
        </div>

        <div class="canvas">
            <svg class="drawing">
                <circle cx="386" cy="245" r="150" />
                <circle cx="702" cy="251" r="114" />
                <path class="cursor" d="M866.500 270.500h125M997.500 270.500h125M994.500 143.500v124M994.500 273.500v125M991.500 267.500h6v6h-6z" />
            </svg>
            <div class="view-label">[−][俯视][二维线框]</div>

            <div class="viewcube">
                <span>北</span>
                <div class="cube-row">
                    <span>西</span>
                    <button class="cube-face"><span>上</span></button>
                    <span>东</span>
                </div>
                <span>南</span>
                <button class="wcs">WCS <i>▽</i></button>
            </div>

            <svg class="ucs-icon" viewBox="0 0 56 54">
                <path d="M6.500 13v34M10 49.500h32M3.500 45.500h7v7h-7zM6.500 47v2.500h4M7 2l4.500 5L16 2M11.500 7v5M45 40l10 9M55 40l-10 9" />
            </svg>

            <svg class="watermark" viewBox="0 0 290 142">
                <g class="paw">
                    <ellipse cx="107" cy="38" rx="11" ry="14" />
                    <ellipse cx="127" cy="17" rx="10" ry="15" />
                    <ellipse cx="153" cy="19" rx="11" ry="14" />
                    <ellipse cx="168" cy="43" rx="11" ry="14" />
                    <path d="M136 39c16 0 20 19 31 31 10 12 4 24-10 22-14-3-28-3-42 0-14 2-19-10-10-22 11-12 15-31 31-31z" />
                </g>
                <text class="wm-big" x="0" y="90">Bai</text>
                <text class="wm-du" x="114" y="83">du</text>
                <text class="wm-cn" x="182" y="86">经验</text>
                <text class="wm-url" x="2" y="127">jingyan.baidu.com</text>
            </svg>

            <div class="command">
                <div class="history">
                    <div>2P)/切点、切点、半径(T)]:</div>
                    <div>&gt;:</div>
                </div>
                <div class="suggest">
                    <ul class="matches">
                        <li class="selected">
                            <svg><use href="#line" /></svg>L (LINE)
                            <button aria-label="帮助"><svg><use href="#help" /></svg></button>
                            <button aria-label="联机搜索"><svg><use href="#globe" /></svg></button>
                        </li>
                        <li><svg><use href="#gear" /></svg>LTS (LTSCALE)</li>
                        <li><svg><use href="#dist" /></svg>LENGTH (DIST)</li>
                        <li><svg><use href="#layers" /></svg>LA (LAYER)</li>
                        <li><svg><use href="#lengthen" /></svg>LEN (LENGTHEN)</li>
                        <li><svg><use href="#limits" /></svg>LIMITS</li>
                        <li><svg><use href="#xline" /></svg>LAYOUTLINE (XLINE)</li>
                    </ul>
                    <div class="category"><svg><use href="#gear" /></svg>LAYEREVAL<button aria-label="展开">+</button></div>
                    <div class="category"><svg><use href="#insert" /></svg><span>块: &nbsp;Oblique</span><button aria-label="展开">+</button></div>
                </div>
                <div class="command-line">
                    <div class="handle">
                        <button aria-label="关闭"><svg viewBox="0 0 12 12"><path stroke="#fff" stroke-width="2" d="M2 2l8 8M10 2l-8 8" /></svg></button>
                        <button aria-label="自定义"><svg><use href="#wrench" /></svg></button>
                    </div>
                    <button class="recent" aria-label="最近使用的命令"><svg><use href="#prompt" /></svg><span class="caret small"></span></button>
                    <input type="text" value="L" aria-label="命令">
                    <button class="expand" aria-label="展开历史"></button>
                </div>
            </div>
        </div>
    </main>

    <footer class="statusbar">
        <div class="status-group"><button class="model">模型</button></div>
        <div class="status-group">
            <button aria-label="栅格"><svg><use href="#s-grid" /></svg></button>
            <button class="on" aria-label="捕捉"><svg><use href="#s-snap" /></svg></button>
            <button class="drop" aria-label="捕捉设置"></button>
        </div>
        <div class="status-group">
            <button class="on" aria-label="动态输入"><svg><use href="#s-dyn" /></svg></button>
            <button class="on edge" aria-label="正交"><svg><use href="#s-ortho" /></svg></button>
            <button aria-label="极轴"><svg><use href="#s-polar" /></svg></button>
            <button class="drop" aria-label="极轴设置"></button>
            <button aria-label="等轴测"><svg><use href="#s-iso" /></svg></button>
            <button class="drop" aria-label="等轴测设置"></button>
            <button class="edge" aria-label="对象追踪"><svg><use href="#s-track" /></svg></button>
            <button class="on" aria-label="对象捕捉"><svg><use href="#s-osnap" /></svg></button>
            <button class="drop" aria-label="捕捉选项"></button>
            <button class="on edge" aria-label="线宽"><svg><use href="#s-lwt" /></svg></button>
            <button class="edge" aria-label="三维捕捉"><svg><use href="#s-3d" /></svg></button>
            <button class="drop" aria-label="三维捕捉选项"></button>
        </div>
        <div class="status-group">
            <button class="on" aria-label="注释可见性"><svg><use href="#s-person" /></svg></button>
            <button aria-label="自动缩放"><svg><use href="#s-auto" /></svg></button>
            <button aria-label="注释比例"><svg><use href="#s-scale" /></svg></button>
            <button class="ratio">1:1<span class="caret"></span></button>
        </div>
        <div class="status-group">
            <button class="gear" aria-label="切换工作空间"><svg><use href="#gear" /></svg></button>
            <button class="drop" aria-label="工作空间选项"></button>
            <button class="edge" aria-label="注释监视器"><svg><use href="#s-plus" /></svg></button>
        </div>
        <div class="status-group"><button aria-label="隔离对象"><svg><use href="#s-iso2" /></svg></button></div>
        <div class="status-group"><button aria-label="硬件加速"><svg><use href="#s-perf" /></svg></button></div>
        <div class="status-group end">
            <button aria-label="全屏显示"><svg><use href="#s-full" /></svg></button>
            <button aria-label="自定义"><svg><use href="#s-menu" /></svg></button>
        </div>
    </footer>
</body>

</html>
```

FILE: styles.css
```css
* {
    box-sizing: border-box;
}

body {
    margin: 0;
    height: 100vh;
    display: flex;
    flex-direction: column;
    overflow: hidden;
    background-color: #5a5a5a;
    color: #e6e6e6;
    font-family: "Open Sans", "Noto Sans CJK SC", sans-serif;
    font-size: 13px;
    line-height: 16px;
}

button,
select,
input {
    margin: 0;
    padding: 0;
    border: 0;
    background: none;
    color: inherit;
    font: inherit;
}

select {
    appearance: none;
    outline: 0;
}

svg {
    flex: none;
}

.sprite {
    position: absolute;
}

/* stroke and fill styles shared by the icons */
.w {
    fill: none;
    stroke: #dcdce2;
    stroke-width: 1.2;
}

.g {
    fill: none;
    stroke: #b4b6ba;
    stroke-width: 1.2;
}

.b {
    fill: none;
    stroke: #7fb0f5;
    stroke-width: 1.2;
}

.k {
    fill: none;
    stroke: #3a3c40;
    stroke-width: 1.2;
}

.wf {
    fill: #eeeef2;
}

.bf {
    fill: #6fa5ee;
}

.caret {
    flex: none;
    width: 0;
    height: 0;
    border: 4px solid transparent;
    border-top: 4px solid #ffffff;
    border-bottom: 0;
}

.caret.small {
    border-width: 3px 3px 0;
}

/* title bar */
.titlebar {
    flex: none;
    display: flex;
    height: 24px;
    background-color: #ffffff;
}

.app-button {
    position: relative;
    z-index: 2;
    width: 30px;
    height: 30px;
    margin: 5px 6px 0 5px;
    background: linear-gradient(#b4b4b4, #6a6a6a);
    border: 1px solid #2c2c2c;
}

.app-button svg {
    display: block;
    width: 28px;
    height: 28px;
}

.qat,
.infocenter {
    display: flex;
    align-items: center;
    background: linear-gradient(#a8a8a8, #8e8e8e);
}

.qat {
    padding-left: 6px;
}

.q {
    display: flex;
    justify-content: center;
    width: 26px;
}

.q svg {
    width: 18px;
    height: 17px;
}

.drop {
    display: flex;
    align-items: center;
    justify-content: center;
    width: 12px;
    height: 20px;
}

.drop::before {
    content: "";
    border: 3px solid transparent;
    border-top-color: #ffffff;
    border-bottom: 0;
}

.drop.dim::before {
    border-top-color: #d0d0d0;
}

.drop.bar {
    width: 18px;
}

.drop.bar::before {
    width: 9px;
    height: 8px;
    border: 0;
    background-color: #ffffff;
    clip-path: polygon(0 0, 100% 0, 100% 20%, 0 20%, 0 45%, 100% 45%, 50% 100%, 0 45%);
}

.drop.side {
    width: 16px;
}

.drop.side::before {
    border: 4px solid transparent;
    border-left: 5px solid #ffffff;
    border-right: 0;
}

.workspace {
    display: flex;
    align-items: center;
    gap: 6px;
    width: 192px;
    height: 24px;
    padding-left: 4px;
    background-color: #565656;
    border: 1px solid #333333;
}

.workspace svg {
    width: 15px;
    height: 15px;
}

.workspace select,
.combo select {
    flex: 1;
    height: 100%;
    background-image: linear-gradient(45deg, transparent 50%, #ffffff 50%), linear-gradient(-45deg, transparent 50%, #ffffff 50%);
    background-position: right 5px center, right 1px center;
    background-size: 4px 4px;
    background-repeat: no-repeat;
}

.workspace select {
    font-size: 14px;
}

.doc-title {
    flex: 1;
    margin: 0;
    color: #1c1c1c;
    font-size: 14px;
    font-weight: 400;
    line-height: 23px;
    text-align: center;
    white-space: nowrap;
}

.search {
    width: 192px;
    height: 24px;
    padding: 0 4px 3px;
    background-color: #6b6b6b;
    border: 1px solid #444444;
    font-size: 12px;
}

.search::placeholder {
    color: #b4b4b4;
    font-style: italic;
}

.infocenter {
    width: 462px;
}

.login {
    display: flex;
    align-items: center;
    gap: 5px;
    flex: 1;
    padding-left: 4px;
}

.login svg {
    width: 18px;
    height: 17px;
}

.more {
    width: 26px;
    margin-left: 9px;
    color: #222222;
    font-size: 12px;
}

.win-controls {
    display: flex;
    width: 190px;
    padding-left: 40px;
    color: #9c9c9c;
}

.win-controls button {
    width: 50px;
    padding-top: 2px;
}

.win-controls svg,
.doc-controls svg {
    width: 12px;
    height: 12px;
}

/* menu bar */
.menubar {
    flex: none;
    display: flex;
    height: 23px;
    padding: 0 1px 0 43px;
    background: linear-gradient(#9d9d9d, #565656);
    border-bottom: 1px solid #3a3a3a;
}

.menubar > button {
    padding: 0 11px;
    color: #f4f4f4;
}

.doc-controls {
    display: flex;
    align-items: center;
    gap: 6px;
    margin-left: auto;
    color: #222222;
}

.doc-controls button {
    display: flex;
}

/* ribbon */
.ribbon-tabs {
    flex: none;
    display: flex;
    height: 22px;
    padding-left: 4px;
    background-color: #535353;
    border-bottom: 1px solid #3a3a3a;
}

.ribbon-tabs button {
    padding: 0 11px 0 10px;
    color: #c8c8c8;
}

.ribbon-tabs .active {
    margin-top: 3px;
    background: linear-gradient(#7d7d7d, #5f5f5f);
    color: #ffffff;
    outline: 1px solid #3e3e3e;
    line-height: 14px;
}

.ribbon-tabs .collapse {
    display: flex;
    align-items: center;
    gap: 7px;
    padding-left: 26px;
}

.pill {
    display: flex;
    align-items: center;
    justify-content: center;
    width: 14px;
    height: 8px;
    border-radius: 2px;
    background-color: #e6e6e6;
}

.pill::before {
    content: "";
    width: 6px;
    height: 3px;
    background-color: #444444;
    clip-path: polygon(50% 0, 100% 100%, 0 100%);
}

.ribbon {
    flex: none;
    display: grid;
    grid-template-columns: 227fr 243fr 167fr 270fr 144fr 250fr 73fr 82fr 81fr 62fr;
    height: 106px;
    border-bottom: 2px solid #8c8c8c;
}

.panel {
    display: flex;
    flex-direction: column;
    min-width: 0;
    background-color: #5c5c5c;
    border-right: 2px solid #424242;
}

.panel-body {
    flex: 1;
    display: flex;
    min-width: 0;
    padding: 4px 0 0 7px;
}

.panel h2 {
    position: relative;
    display: flex;
    align-items: center;
    justify-content: center;
    gap: 7px;
    height: 20px;
    margin: 0;
    background: linear-gradient(#484848, #545454);
    color: #f4f4f4;
    font-size: 13px;
    font-weight: 400;
    white-space: nowrap;
}

.launch {
    position: absolute;
    right: 1px;
    width: 8px;
    height: 8px;
}

.big {
    flex: none;
    display: flex;
    flex-direction: column;
    align-items: center;
    width: 43px;
    padding-top: 3px;
    white-space: nowrap;
}

.big svg {
    width: 32px;
    height: 32px;
    margin-bottom: 6px;
}

.big .caret {
    margin-top: 3px;
}

.rows {
    display: grid;
    grid-auto-rows: 25px;
    align-content: start;
}

.row {
    display: flex;
    align-items: center;
    gap: 5px;
    white-space: nowrap;
}

.row svg {
    width: 18px;
    height: 17px;
}

.row .caret {
    margin-left: 6px;
}

.p-draw {
    padding-left: 2px;
}

.p-draw .rows {
    margin-left: 10px;
}

.p-draw .row .caret {
    margin-left: 2px;
}

.modify {
    grid-template-columns: 62px 64px 80px 18px;
}

.p-annot {
    padding-left: 4px;
}

.p-annot .big {
    width: 45px;
}

.p-annot .rows {
    margin-left: 2px;
}

.p-layer {
    padding-left: 1px;
}

.layer-tools {
    flex: 1;
    margin-right: 2px;
}

.combo {
    display: flex;
    align-items: center;
    gap: 4px;
    height: 24px;
    margin-bottom: 1px;
    padding: 0 1px 0 4px;
    background-color: #505050;
    border: 1px solid #303030;
    box-shadow: inset 0 0 0 1px #6a6a6a;
}

.layer-tools .combo svg {
    width: 16px;
    height: 16px;
}

.layer-tools .combo .swatch {
    margin: 0 0 0 3px;
}

.swatch {
    width: 15px;
    height: 15px;
    background-color: #000000;
}

.swatch.framed {
    width: 16px;
    height: 16px;
    margin: 0 8px 0 9px;
    border: 1px solid #a8a8a8;
}

.stroke {
    width: 63px;
    height: 1px;
    margin-left: 4px;
    background-color: #d8d8d8;
}

.stroke.thick {
    height: 5px;
    background-color: #ffffff;
}

.stroke + select {
    margin-left: -1px;
}

.layer-grid {
    grid-template-columns: 25px 26px 26px 25px auto;
    padding-left: 4px;
}

.p-block {
    padding-left: 1px;
}

.p-block .rows {
    margin-left: 2px;
}

.p-props {
    padding-left: 1px;
}

.prop-grid {
    flex: 1;
    grid-template-columns: 22px 1fr;
    align-items: center;
    margin-right: 2px;
}

.prop-grid .combo {
    margin: 0;
}

.prop-grid > svg {
    width: 17px;
    height: 17px;
}

.p-group {
    padding-left: 2px;
}

.p-group .row {
    justify-content: center;
    width: 24px;
}

.row.pressed {
    background: linear-gradient(#5d88c8, #4a74b4);
    outline: 1px solid #2c4a7c;
    outline-offset: -1px;
}

.p-util {
    padding-left: 5px;
}

.p-util .rows {
    margin-left: 7px;
}

.p-clip {
    padding-left: 5px;
}

.p-clip .rows {
    margin-left: 8px;
}

.p-view {
    padding-left: 11px;
}

/* file tabs */
.file-tabs {
    flex: none;
    display: flex;
    height: 26px;
    padding: 3px 0 0 20px;
    background-color: #383838;
}

.file-tab {
    position: relative;
    display: flex;
    justify-content: space-between;
    width: 132px;
    padding: 0 12px;
    background: linear-gradient(#666666 0 1px, #585858 1px, #4a4a4a) center / 90px 100% no-repeat;
    color: #a8a8a8;
    font-size: 14px;
}

.file-tab::before,
.file-tab::after {
    content: "";
    position: absolute;
    top: 0;
    bottom: 0;
    width: 50px;
    background: linear-gradient(#666666 0 1px, #585858 1px, #4a4a4a);
}

.file-tab::before {
    left: 0;
    border-radius: 7px 0 0 0;
    transform: skewX(-18deg);
}

.file-tab::after {
    right: 0;
    border-radius: 0 7px 0 0;
    transform: skewX(18deg);
}

.file-tab button {
    position: relative;
    z-index: 2;
}

.file-tab .close {
    color: #2c2c2c;
    font-size: 16px;
    font-weight: 700;
}

.file-tab.active {
    z-index: 1;
    color: #ffffff;
}

.file-tab.active,
.file-tab.active::before,
.file-tab.active::after {
    background-image: linear-gradient(#8a8a8a 0 1px, #747474 1px, #5c5c5c);
}

.add-tab {
    width: 22px;
    height: 17px;
    margin: 4px 0 0 9px;
    border-radius: 3px 9px 3px 9px;
    background-color: #555555;
    color: #c8c8c8;
    font-size: 20px;
    font-weight: 700;
    line-height: 14px;
}

/* horizontal toolbars */
.toolbars {
    flex: none;
    display: flex;
    height: 36px;
    padding: 3px 0;
    overflow: hidden;
    background-color: #5c5c5c;
    border-top: 1px solid #6e6e6e;
    border-bottom: 1px solid #484848;
}

.bar-group {
    flex: none;
    display: flex;
    align-items: center;
    padding-left: 5px;
    border-right: 1px solid #3a3a3a;
    background: repeating-linear-gradient(#333333 0 1px, transparent 1px 3px) 1px 2px / 3px 10px no-repeat;
}

.bar-group .last {
    margin: 0 1px 0 3px;
}

.tool {
    position: relative;
    flex: none;
    display: flex;
    align-items: center;
    justify-content: center;
    width: 28px;
    height: 27px;
}

.tool svg {
    width: 21px;
    height: 20px;
}

.flyout::after {
    content: "";
    position: absolute;
    right: 2px;
    bottom: 2px;
    border: 2px solid #000000;
    border-top-color: transparent;
    border-left-color: transparent;
}

.split {
    width: 1px;
    height: 26px;
    margin: 0 2px;
    background-color: #a0a0a0;
}

.light-select {
    align-self: flex-start;
    display: flex;
    align-items: center;
    gap: 4px;
    height: 16px;
    margin: 1px 2px 0 4px;
    padding: 0 6px 0 4px;
    background-color: #e4e4e4;
    color: #333333;
    font-size: 12px;
}

.light-select svg {
    width: 12px;
    height: 12px;
}

.light-select select {
    flex: 1;
}

.world {
    width: 124px;
    margin-left: 6px;
}

.view {
    width: 99px;
}

.chevron {
    width: 6px;
    height: 6px;
    margin-top: -4px;
    border: solid #444444;
    border-width: 0 1px 1px 0;
    transform: rotate(45deg);
}

/* work area */
.workarea {
    flex: 1;
    display: flex;
    min-height: 0;
    border-bottom: 1px solid #484848;
}

.side-bars {
    flex: none;
    display: flex;
    align-items: flex-start;
    gap: 2px;
    width: 62px;
    border-right: 1px solid #777777;
}

.side-bar {
    width: 28px;
    padding-top: 6px;
    border: solid #3c3c3c;
    border-width: 0 1px 1px 0;
    background: repeating-linear-gradient(90deg, #222222 0 1px, transparent 1px 3px) 2px 2px / 10px 3px no-repeat;
}

.side-bar .tool {
    width: 27px;
}

.draw-bar .tool {
    width: 24px;
}

.side-bar hr {
    height: 2px;
    margin: 2px 1px 1px;
    border: 0;
    background-color: #c8c8c8;
}

.canvas {
    position: relative;
    flex: 1;
    overflow: hidden;
    background-color: #ffffff;
}

.drawing {
    position: absolute;
    width: 100%;
    height: 100%;
    fill: none;
    stroke: #000000;
    stroke-width: 4;
}

.cursor {
    stroke: #333333;
    stroke-width: 1;
}

.view-label {
    position: absolute;
    top: 1px;
    left: 2px;
    color: #111111;
    font-family: "Liberation Sans", "Noto Sans CJK SC", sans-serif;
    font-size: 9px;
}

.viewcube {
    position: absolute;
    top: 9px;
    right: 8px;
    width: 98px;
    display: flex;
    flex-direction: column;
    align-items: center;
    color: #aaaaaa;
    font-weight: 700;
}

.viewcube::before {
    content: "";
    position: absolute;
    top: 6px;
    width: 86px;
    height: 86px;
    border: 8px solid #fcfcfc;
    border-radius: 50%;
}

.viewcube > * {
    position: relative;
}

.cube-row {
    display: flex;
    align-items: center;
    justify-content: space-between;
    align-self: stretch;
    margin: 13px 2px 14px;
}

.cube-face {
    width: 38px;
    height: 38px;
    padding: 6px;
    background-color: #f0f0f2;
    border: 1px solid #888888;
}

.cube-face span {
    display: block;
    background-color: #e0e3ee;
    color: #8c909f;
    font-size: 16px;
    font-weight: 400;
    line-height: 24px;
}

.wcs {
    width: 34px;
    height: 12px;
    margin-top: 13px;
    border-radius: 3px;
    background-color: #e6e8f0;
    color: #9a9aa8;
    font-size: 8px;
    line-height: 12px;
    white-space: nowrap;
}

.wcs i {
    font-style: normal;
}

.ucs-icon {
    position: absolute;
    left: 10px;
    bottom: 13px;
    width: 56px;
    height: 54px;
    fill: none;
    stroke: #222222;
}

.watermark {
    position: absolute;
    right: 80px;
    bottom: 0;
    width: 290px;
    height: 142px;
    fill: #ffffff;
    stroke: #d6d6d6;
    stroke-width: 4;
    paint-order: stroke;
    font-family: "Liberation Sans", "Noto Sans CJK SC", sans-serif;
    font-weight: 700;
}

.paw {
    stroke-width: 2;
}

.wm-big {
    font-size: 64px;
}

.wm-du {
    font-size: 38px;
}

.wm-cn {
    font-size: 48px;
}

.wm-url {
    font-family: "Open Sans", sans-serif;
    font-size: 33px;
    font-weight: 400;
}

/* command line */
.command {
    position: absolute;
    left: 367px;
    bottom: 0;
    width: 804px;
    font-family: "DejaVu Sans Mono", "Noto Sans CJK SC", monospace;
    font-size: 19px;
}

.history {
    position: absolute;
    left: 390px;
    bottom: 33px;
    display: flex;
    flex-direction: column;
    align-items: flex-start;
    gap: 6px;
}

.history div {
    padding: 0 4px 0 8px;
    border-radius: 2px;
    background-color: #777777;
    color: #ffffff;
    line-height: 26px;
    white-space: nowrap;
}

.suggest {
    position: relative;
    width: 343px;
    margin-left: 58px;
    border: 1px solid #111111;
    background-color: #777777;
}

.matches {
    height: 165px;
    margin: 0;
    padding: 1px 18px 0 0;
    overflow: hidden;
    list-style: none;
    background: linear-gradient(#b4b4b4, #b4b4b4) right 6px top 4px / 6px 18px no-repeat;
}

.matches li {
    display: flex;
    align-items: center;
    gap: 6px;
    height: 26px;
    padding-left: 4px;
    color: #ffffff;
}

.matches svg,
.category svg {
    width: 16px;
    height: 16px;
}

.matches .selected {
    height: 25px;
    background: linear-gradient(#a0bce8, #7090c4);
    border-bottom: 1px solid #253a66;
}

.selected button {
    display: flex;
}

.selected button:first-of-type {
    margin-left: auto;
}

.selected button:last-of-type {
    margin-right: 3px;
}

.selected button svg {
    width: 17px;
    height: 17px;
}

.category {
    display: flex;
    align-items: center;
    gap: 6px;
    height: 24px;
    padding: 0 7px 0 4px;
    overflow: hidden;
    background-color: #505050;
    border-top: 1px solid #111111;
    color: #a4a4a4;
    font-family: "Open Sans", "Noto Sans CJK SC", sans-serif;
    font-size: 20px;
    font-weight: 700;
    line-height: 24px;
}

.category svg {
    opacity: .6;
}

.category button {
    margin-left: auto;
    font-size: 13px;
}

.command-line {
    position: relative;
    display: flex;
    align-items: center;
    height: 29px;
    background-color: #c8c8c8;
    border: 1px solid #777777;
    border-radius: 3px;
    color: #111111;
}

.handle {
    display: flex;
    align-items: center;
    gap: 10px;
    width: 58px;
    height: 100%;
    padding-left: 15px;
    background: repeating-linear-gradient(#bbbbbb 0 1px, transparent 1px 3px) 8px 5px / 1px 18px no-repeat, linear-gradient(#5c5c5c, #3c3c3c);
}

.handle button {
    display: flex;
}

.handle svg {
    width: 12px;
    height: 12px;
}

.handle button + button svg {
    width: 16px;
    height: 16px;
}

.recent {
    display: flex;
    align-items: center;
    gap: 4px;
    padding: 0 5px;
}

.recent svg {
    width: 15px;
    height: 15px;
}

.recent .caret {
    border-top-color: #888888;
}

.command-line input {
    width: 12px;
    height: 25px;
    border-right: 1px solid #111111;
    outline: 0;
    font-family: "DejaVu Sans Mono", monospace;
    font-size: 19px;
}

.expand {
    margin: 8px 2px 0 auto;
    border: 4px solid transparent;
    border-bottom: 5px solid #222222;
    border-top: 0;
}

/* status bar */
.statusbar {
    flex: none;
    display: flex;
    justify-content: flex-end;
    gap: 3px;
    height: 28px;
    background-color: #383838;
    color: #b8b8b8;
}

.status-group {
    display: flex;
    background-color: #525252;
    border-left: 1px solid #707070;
    border-right: 1px solid #707070;
}

.status-group button {
    display: flex;
    align-items: center;
    justify-content: center;
    width: 26px;
    height: 28px;
}

.status-group svg {
    width: 17px;
    height: 17px;
}

.status-group .gear svg {
    width: 14px;
    height: 14px;
}

.status-group .drop {
    width: 16px;
}

.status-group .drop::before {
    border-width: 4px 3px 0;
}

.status-group .on {
    color: #2f8cf0;
}

.status-group .edge {
    border-left: 1px solid #6c6c6c;
}

.status-group .model {
    width: 28px;
    color: #ffffff;
}

.status-group .ratio {
    gap: 3px;
    width: 34px;
    color: #ffffff;
    font-size: 12px;
}

.status-group.end {
    border-right: 0;
}

.ratio .caret {
    border-width: 4px 3px 0;
}
```
